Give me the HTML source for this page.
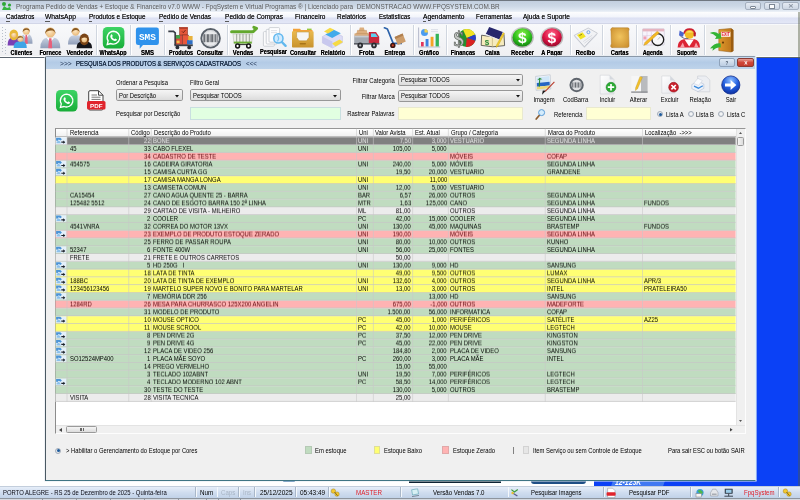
<!DOCTYPE html>
<html lang="pt-BR"><head><meta charset="utf-8"><title>Programa Pedido de Vendas</title>
<style>
html,body{margin:0;padding:0;}
body{width:800px;height:500px;overflow:hidden;position:relative;background:#fff;font-family:"Liberation Sans", sans-serif;}
#app{position:absolute;left:0;top:0;width:800px;height:500px;overflow:hidden;will-change:transform;}
#app div,#app svg,#app .t{position:absolute;}
.t{white-space:nowrap;display:block;}
svg{overflow:visible;}
</style></head><body><div id="app">
<div style="left:0px;top:0px;width:800px;height:12.4px;background:linear-gradient(#6f7780 0,#6f7780 0.7px,#c2cfdf 0.9px,#ccd8e6 50%,#dbe4ef 80%,#eef2f8 100%);"></div>
<span class="t" style="left:16.00px;top:1.60px;font-size:7.2px;line-height:9px;color:#5a5a5a;transform:scaleX(0.8900);transform-origin:0 50%;white-space:pre;">Programa Pedido de Vendas + Estoque &amp; Financeiro v7.0 WWW - FpqSystem e Virtual Programas ® | Licenciado para  DEMONSTRACAO WWW.FPQSYSTEM.COM.BR</span>
<div style="left:745px;top:2px;width:16px;height:8px;border:1px solid #a5b0bf;border-radius:2px;background:linear-gradient(#e4eaf2,#ccd6e3);box-sizing:border-box;"></div>
<div style="left:764px;top:2px;width:15.5px;height:8px;border:1px solid #a5b0bf;border-radius:2px;background:linear-gradient(#e4eaf2,#ccd6e3);box-sizing:border-box;"></div>
<div style="left:782px;top:2px;width:17px;height:8px;border:1px solid #a5b0bf;border-radius:2px;background:linear-gradient(#e4eaf2,#ccd6e3);box-sizing:border-box;"></div>
<div style="left:750px;top:5.5px;width:6px;height:3px;border:0.8px solid #7c8795;border-radius:1px;box-sizing:border-box;background:#fbfcfd;"></div>
<div style="left:768.5px;top:3.6px;width:6px;height:5px;border:0.8px solid #7c8795;box-sizing:border-box;background:#fbfcfd;"></div>
<span class="t" style="left:788.00px;top:2.70px;font-size:5.8px;line-height:7px;color:#8a94a2;transform:scaleX(1.1500);transform-origin:50% 50%;font-weight:bold;">✕</span>
<svg style="left:1px;top:1px" width="12" height="10" viewBox="0 0 12 10"><circle cx="3" cy="3" r="2" fill="#2da836"/><circle cx="8.5" cy="4" r="1.6" fill="#2da836"/><path d="M1 9 L3 5 L6 7 L9 6 L10 9 Z" fill="#36b440"/></svg>
<div style="left:0px;top:12.4px;width:800px;height:11.6px;background:linear-gradient(#fdfdfe 0,#f3f5fb 38%,#dde1f3 52%,#e2e6f6 88%,#c9cee0 100%);"></div>
<span class="t" style="left:6.00px;top:12.40px;font-size:7.6px;line-height:10px;color:#151515;transform:scaleX(0.8235);transform-origin:0 50%;text-shadow:0 0 0.4px #333;">Cadastros</span>
<div style="left:6px;top:21px;width:3.8px;height:1px;background:#5a5a5a;height:1px;"></div>
<span class="t" style="left:45.00px;top:12.40px;font-size:7.6px;line-height:10px;color:#151515;transform:scaleX(0.8849);transform-origin:0 50%;text-shadow:0 0 0.4px #333;">WhatsApp</span>
<div style="left:45px;top:21px;width:5.2px;height:1px;background:#5a5a5a;height:1px;"></div>
<span class="t" style="left:88.50px;top:12.40px;font-size:7.6px;line-height:10px;color:#151515;transform:scaleX(0.8471);transform-origin:0 50%;text-shadow:0 0 0.4px #333;">Produtos e Estoque</span>
<div style="left:88.5px;top:21px;width:3.8px;height:1px;background:#5a5a5a;height:1px;"></div>
<span class="t" style="left:159.00px;top:12.40px;font-size:7.6px;line-height:10px;color:#151515;transform:scaleX(0.8435);transform-origin:0 50%;text-shadow:0 0 0.4px #333;">Pedido de Vendas</span>
<div style="left:159px;top:21px;width:3.8px;height:1px;background:#5a5a5a;height:1px;"></div>
<span class="t" style="left:225.00px;top:12.40px;font-size:7.6px;line-height:10px;color:#151515;transform:scaleX(0.8642);transform-origin:0 50%;text-shadow:0 0 0.4px #333;">Pedido de Compras</span>
<div style="left:225px;top:21px;width:3.8px;height:1px;background:#5a5a5a;height:1px;"></div>
<span class="t" style="left:295.00px;top:12.40px;font-size:7.6px;line-height:10px;color:#151515;transform:scaleX(0.8603);transform-origin:0 50%;text-shadow:0 0 0.4px #333;">Financeiro</span>
<span class="t" style="left:337.00px;top:12.40px;font-size:7.6px;line-height:10px;color:#151515;transform:scaleX(0.8483);transform-origin:0 50%;text-shadow:0 0 0.4px #333;">Relatórios</span>
<span class="t" style="left:378.75px;top:12.40px;font-size:7.6px;line-height:10px;color:#151515;transform:scaleX(0.8137);transform-origin:0 50%;text-shadow:0 0 0.4px #333;">Estatisticas</span>
<span class="t" style="left:422.50px;top:12.40px;font-size:7.6px;line-height:10px;color:#151515;transform:scaleX(0.8776);transform-origin:0 50%;text-shadow:0 0 0.4px #333;">Agendamento</span>
<div style="left:422.5px;top:21px;width:3.8px;height:1px;background:#5a5a5a;height:1px;"></div>
<span class="t" style="left:475.75px;top:12.40px;font-size:7.6px;line-height:10px;color:#151515;transform:scaleX(0.8363);transform-origin:0 50%;text-shadow:0 0 0.4px #333;">Ferramentas</span>
<span class="t" style="left:523.00px;top:12.40px;font-size:7.6px;line-height:10px;color:#151515;transform:scaleX(0.8630);transform-origin:0 50%;text-shadow:0 0 0.4px #333;">Ajuda e Suporte</span>
<div style="left:0px;top:24px;width:800px;height:33.6px;background:linear-gradient(#f8f9fb,#f2f3f6 60%,#efeff1);"></div>
<div style="left:705.6px;top:24.6px;width:94.4px;height:31.4px;background:#f0f0f0;"></div>
<div style="left:0px;top:56px;width:800px;height:1.1px;background:#fdfdfd;"></div>
<div style="left:0px;top:57.1px;width:800px;height:1.1px;background:#5d6670;"></div>
<div style="left:2px;top:27px;width:1px;height:1px;background:#b9c0cb;"></div>
<div style="left:4.5px;top:28.5px;width:1px;height:1px;background:#b9c0cb;"></div>
<div style="left:2px;top:30px;width:1px;height:1px;background:#b9c0cb;"></div>
<div style="left:4.5px;top:31.5px;width:1px;height:1px;background:#b9c0cb;"></div>
<div style="left:2px;top:33px;width:1px;height:1px;background:#b9c0cb;"></div>
<div style="left:4.5px;top:34.5px;width:1px;height:1px;background:#b9c0cb;"></div>
<div style="left:2px;top:36px;width:1px;height:1px;background:#b9c0cb;"></div>
<div style="left:4.5px;top:37.5px;width:1px;height:1px;background:#b9c0cb;"></div>
<div style="left:2px;top:39px;width:1px;height:1px;background:#b9c0cb;"></div>
<div style="left:4.5px;top:40.5px;width:1px;height:1px;background:#b9c0cb;"></div>
<div style="left:2px;top:42px;width:1px;height:1px;background:#b9c0cb;"></div>
<div style="left:4.5px;top:43.5px;width:1px;height:1px;background:#b9c0cb;"></div>
<div style="left:2px;top:45px;width:1px;height:1px;background:#b9c0cb;"></div>
<div style="left:4.5px;top:46.5px;width:1px;height:1px;background:#b9c0cb;"></div>
<div style="left:2px;top:48px;width:1px;height:1px;background:#b9c0cb;"></div>
<div style="left:4.5px;top:49.5px;width:1px;height:1px;background:#b9c0cb;"></div>
<div style="left:2px;top:51px;width:1px;height:1px;background:#b9c0cb;"></div>
<div style="left:4.5px;top:52.5px;width:1px;height:1px;background:#b9c0cb;"></div>
<div style="left:95.75px;top:25px;width:1px;height:30px;background:#d0d6df;"></div>
<div style="left:96.75px;top:25px;width:1px;height:30px;background:#fff;"></div>
<div style="left:130.1px;top:25px;width:1px;height:30px;background:#d0d6df;"></div>
<div style="left:131.1px;top:25px;width:1px;height:30px;background:#fff;"></div>
<div style="left:163.9px;top:25px;width:1px;height:30px;background:#d0d6df;"></div>
<div style="left:164.9px;top:25px;width:1px;height:30px;background:#fff;"></div>
<div style="left:227.2px;top:25px;width:1px;height:30px;background:#d0d6df;"></div>
<div style="left:228.2px;top:25px;width:1px;height:30px;background:#fff;"></div>
<div style="left:349.8px;top:25px;width:1px;height:30px;background:#d0d6df;"></div>
<div style="left:350.8px;top:25px;width:1px;height:30px;background:#fff;"></div>
<div style="left:412.5px;top:25px;width:1px;height:30px;background:#d0d6df;"></div>
<div style="left:413.5px;top:25px;width:1px;height:30px;background:#fff;"></div>
<div style="left:446.3px;top:25px;width:1px;height:30px;background:#d0d6df;"></div>
<div style="left:447.3px;top:25px;width:1px;height:30px;background:#fff;"></div>
<div style="left:569.5px;top:25px;width:1px;height:30px;background:#d0d6df;"></div>
<div style="left:570.5px;top:25px;width:1px;height:30px;background:#fff;"></div>
<div style="left:602px;top:25px;width:1px;height:30px;background:#d0d6df;"></div>
<div style="left:603px;top:25px;width:1px;height:30px;background:#fff;"></div>
<div style="left:635.5px;top:25px;width:1px;height:30px;background:#d0d6df;"></div>
<div style="left:636.5px;top:25px;width:1px;height:30px;background:#fff;"></div>
<div style="left:670px;top:25px;width:1px;height:30px;background:#d0d6df;"></div>
<div style="left:671px;top:25px;width:1px;height:30px;background:#fff;"></div>
<div style="left:704px;top:25px;width:1px;height:30px;background:#d0d6df;"></div>
<div style="left:705px;top:25px;width:1px;height:30px;background:#fff;"></div>
<span class="t" style="left:7.60px;top:48.20px;font-size:6.9px;line-height:9px;color:#000;transform:scaleX(0.8114);transform-origin:50% 50%;font-weight:bold;text-shadow:0 0 0.35px rgba(0,0,0,0.8);">Clientes</span>
<span class="t" style="left:36.60px;top:48.20px;font-size:6.9px;line-height:9px;color:#000;transform:scaleX(0.8207);transform-origin:50% 50%;font-weight:bold;text-shadow:0 0 0.35px rgba(0,0,0,0.8);">Fornece</span>
<span class="t" style="left:63.50px;top:48.20px;font-size:6.9px;line-height:9px;color:#000;transform:scaleX(0.8440);transform-origin:50% 50%;font-weight:bold;text-shadow:0 0 0.35px rgba(0,0,0,0.8);">Vendedor</span>
<span class="t" style="left:96.47px;top:48.20px;font-size:6.9px;line-height:9px;color:#000;transform:scaleX(0.7926);transform-origin:50% 50%;font-weight:bold;text-shadow:0 0 0.35px rgba(0,0,0,0.8);">WhatsApp</span>
<span class="t" style="left:140.03px;top:48.20px;font-size:6.9px;line-height:9px;color:#000;transform:scaleX(0.8706);transform-origin:50% 50%;font-weight:bold;text-shadow:0 0 0.35px rgba(0,0,0,0.8);">SMS</span>
<span class="t" style="left:165.68px;top:48.20px;font-size:6.9px;line-height:9px;color:#000;transform:scaleX(0.7936);transform-origin:50% 50%;font-weight:bold;text-shadow:0 0 0.35px rgba(0,0,0,0.8);">Produtos</span>
<span class="t" style="left:194.12px;top:48.20px;font-size:6.9px;line-height:9px;color:#000;transform:scaleX(0.8240);transform-origin:50% 50%;font-weight:bold;text-shadow:0 0 0.35px rgba(0,0,0,0.8);">Consultar</span>
<span class="t" style="left:230.73px;top:48.20px;font-size:6.9px;line-height:9px;color:#000;transform:scaleX(0.8496);transform-origin:50% 50%;font-weight:bold;text-shadow:0 0 0.35px rgba(0,0,0,0.8);">Vendas</span>
<span class="t" style="left:257.03px;top:47.30px;font-size:6.9px;line-height:9px;color:#000;transform:scaleX(0.8197);transform-origin:50% 50%;font-weight:bold;text-shadow:0 0 0.35px rgba(0,0,0,0.8);">Pesquisar</span>
<span class="t" style="left:286.92px;top:48.20px;font-size:6.9px;line-height:9px;color:#000;transform:scaleX(0.8085);transform-origin:50% 50%;font-weight:bold;text-shadow:0 0 0.35px rgba(0,0,0,0.8);">Consultar</span>
<span class="t" style="left:318.07px;top:48.20px;font-size:6.9px;line-height:9px;color:#000;transform:scaleX(0.8137);transform-origin:50% 50%;font-weight:bold;text-shadow:0 0 0.35px rgba(0,0,0,0.8);">Relatório</span>
<span class="t" style="left:357.79px;top:48.20px;font-size:6.9px;line-height:9px;color:#000;transform:scaleX(0.8882);transform-origin:50% 50%;font-weight:bold;text-shadow:0 0 0.35px rgba(0,0,0,0.8);">Frota</span>
<span class="t" style="left:382.37px;top:48.20px;font-size:6.9px;line-height:9px;color:#000;transform:scaleX(0.7991);transform-origin:50% 50%;font-weight:bold;text-shadow:0 0 0.35px rgba(0,0,0,0.8);">Entrega</span>
<span class="t" style="left:417.44px;top:48.20px;font-size:6.9px;line-height:9px;color:#000;transform:scaleX(0.8291);transform-origin:50% 50%;font-weight:bold;text-shadow:0 0 0.35px rgba(0,0,0,0.8);">Gráfico</span>
<span class="t" style="left:448.26px;top:48.20px;font-size:6.9px;line-height:9px;color:#000;transform:scaleX(0.8202);transform-origin:50% 50%;font-weight:bold;text-shadow:0 0 0.35px rgba(0,0,0,0.8);">Finanças</span>
<span class="t" style="left:483.31px;top:48.20px;font-size:6.9px;line-height:9px;color:#000;transform:scaleX(0.8158);transform-origin:50% 50%;font-weight:bold;text-shadow:0 0 0.35px rgba(0,0,0,0.8);">Caixa</span>
<span class="t" style="left:508.60px;top:48.20px;font-size:6.9px;line-height:9px;color:#000;transform:scaleX(0.8457);transform-origin:50% 50%;font-weight:bold;text-shadow:0 0 0.35px rgba(0,0,0,0.8);">Receber</span>
<span class="t" style="left:538.78px;top:48.20px;font-size:6.9px;line-height:9px;color:#000;transform:scaleX(0.8256);transform-origin:50% 50%;font-weight:bold;text-shadow:0 0 0.35px rgba(0,0,0,0.8);">A Pagar</span>
<span class="t" style="left:573.91px;top:48.20px;font-size:6.9px;line-height:9px;color:#000;transform:scaleX(0.8401);transform-origin:50% 50%;font-weight:bold;text-shadow:0 0 0.35px rgba(0,0,0,0.8);">Recibo</span>
<span class="t" style="left:609.28px;top:48.20px;font-size:6.9px;line-height:9px;color:#000;transform:scaleX(0.8299);transform-origin:50% 50%;font-weight:bold;text-shadow:0 0 0.35px rgba(0,0,0,0.8);">Cartas</span>
<span class="t" style="left:640.37px;top:48.20px;font-size:6.9px;line-height:9px;color:#000;transform:scaleX(0.7915);transform-origin:50% 50%;font-weight:bold;text-shadow:0 0 0.35px rgba(0,0,0,0.8);">Agenda</span>
<span class="t" style="left:674.48px;top:48.20px;font-size:6.9px;line-height:9px;color:#000;transform:scaleX(0.7683);transform-origin:50% 50%;font-weight:bold;text-shadow:0 0 0.35px rgba(0,0,0,0.8);">Suporte</span>
<svg style="left:0;top:0" width="800" height="500" viewBox="0 0 800 500"><defs>
<radialGradient id="skin" cx=".45" cy=".4" r=".6"><stop offset="0" stop-color="#ffe9c4"/><stop offset="1" stop-color="#e9b877"/></radialGradient>
<linearGradient id="suit" x1="0" y1="0" x2="0" y2="1"><stop offset="0" stop-color="#c9d2e2"/><stop offset="1" stop-color="#8f9db8"/></linearGradient>
<radialGradient id="gball" cx=".5" cy=".3" r=".75"><stop offset="0" stop-color="#8cf04a"/><stop offset=".55" stop-color="#2fc01c"/><stop offset="1" stop-color="#0f7a10"/></radialGradient>
<radialGradient id="rball" cx=".5" cy=".3" r=".75"><stop offset="0" stop-color="#ff6a8c"/><stop offset=".55" stop-color="#dc1444"/><stop offset="1" stop-color="#8c0828"/></radialGradient>
<radialGradient id="bball" cx=".5" cy=".25" r=".8"><stop offset="0" stop-color="#8fc0ff"/><stop offset=".5" stop-color="#2460e0"/><stop offset="1" stop-color="#0a2a98"/></radialGradient>
<linearGradient id="ring" x1="0" y1="0" x2="1" y2="1"><stop offset="0" stop-color="#f2f2f2"/><stop offset=".5" stop-color="#8e8e8e"/><stop offset="1" stop-color="#dcdcdc"/></linearGradient>
<radialGradient id="parch" cx=".5" cy=".45" r=".7"><stop offset="0" stop-color="#f1c45e"/><stop offset="1" stop-color="#c98c2c"/></radialGradient>
<linearGradient id="gold" x1="0" y1="0" x2="0" y2="1"><stop offset="0" stop-color="#e9b94e"/><stop offset="1" stop-color="#c8922c"/></linearGradient>
<linearGradient id="wgreen" x1="0" y1="0" x2="0" y2="1"><stop offset="0" stop-color="#3ed465"/><stop offset="1" stop-color="#18ad38"/></linearGradient>
<linearGradient id="door" x1="0" y1="0" x2="1" y2="0"><stop offset="0" stop-color="#e09a2c"/><stop offset="1" stop-color="#b87018"/></linearGradient>
<linearGradient id="pg" x1="0" y1="0" x2="1" y2="1"><stop offset="0" stop-color="#ffffff"/><stop offset="1" stop-color="#e4e6ea"/></linearGradient>
</defs><path d="M20.10 43.70 q0 -9.03 4.65 -9.50 h3.10 q4.65 0 4.65 9.50 z" fill="url(#suit)"/><path d="M25.40 35.62 l1.80 0.00 l0.36 8.07 l-2.52 0.00 z" fill="#e8607a"/><path d="M26.30 38.48 l-2.70 -3.99 l5.40 0 z" fill="#fff"/><path d="M25.51 34.96 l1.58 0.00 l0.43 8.55 l-2.45 0.00 z" fill="#e8607a"/><ellipse cx="26.30" cy="31.20" rx="3.31" ry="3.60" fill="url(#skin)"/><path d="M22.63 32.46 A3.67 4.32 0 0 1 29.97 32.46 Q29.72 30.30 27.92 29.94 Q25.94 29.58 24.32 30.48 Q23.06 31.02 22.63 32.46 z" fill="#8a5a22"/><path d="M7.60 45.50 q0 -7.60 4.65 -8.00 h3.10 q4.65 0 4.65 8.00 z" fill="#7a3fb4"/><ellipse cx="13.80" cy="34.88" rx="4.39" ry="5.40" fill="#e8b838"/><ellipse cx="13.80" cy="34.70" rx="2.59" ry="3.06" fill="url(#skin)"/><path d="M10.92 34.16 Q11.28 30.56 13.80 30.56 Q16.32 30.56 16.68 34.16 Q14.52 32.00 10.92 34.16 z" fill="#e8b838"/><path d="M13.60 48.00 q0 -6.08 4.95 -6.40 h3.30 q4.95 0 4.95 6.40 z" fill="#3fa4e6"/><ellipse cx="20.20" cy="38.60" rx="2.94" ry="3.20" fill="url(#skin)"/><path d="M16.94 39.72 A3.26 3.84 0 0 1 23.46 39.72 Q23.24 37.80 21.64 37.48 Q19.88 37.16 18.44 37.96 Q17.32 38.44 16.94 39.72 z" fill="#9a6a2a"/><path d="M40.30 48.20 q0 -10.26 7.50 -10.80 h5.00 q7.50 0 7.50 10.80 z" fill="url(#suit)"/><path d="M49.00 39.02 l2.60 0.00 l0.52 9.18 l-3.64 0.00 z" fill="#e8607a"/><path d="M50.30 42.26 l-3.90 -4.54 l7.80 0 z" fill="#fff"/><path d="M49.16 38.26 l2.29 0.00 l0.62 9.72 l-3.54 0.00 z" fill="#e8607a"/><ellipse cx="50.30" cy="32.40" rx="4.78" ry="5.20" fill="url(#skin)"/><path d="M45.00 34.22 A5.30 6.24 0 0 1 55.60 34.22 Q55.24 31.10 52.64 30.58 Q49.78 30.06 47.44 31.36 Q45.62 32.14 45.00 34.22 z" fill="#8a5a22"/><path d="M68.00 44.60 q0 -8.93 5.70 -9.40 h3.80 q5.70 0 5.70 9.40 z" fill="url(#suit)"/><ellipse cx="75.60" cy="31.60" rx="3.77" ry="4.10" fill="url(#skin)"/><path d="M71.42 33.04 A4.18 4.92 0 0 1 79.78 33.04 Q79.49 30.58 77.44 30.17 Q75.19 29.76 73.34 30.78 Q71.91 31.40 71.42 33.04 z" fill="#8a5a22"/><path d="M76.50 48.20 q0 -6.27 5.85 -6.60 h3.90 q5.85 0 5.85 6.60 z" fill="#15151a"/><ellipse cx="84.30" cy="39.37" rx="4.76" ry="5.85" fill="#7a4416"/><ellipse cx="84.30" cy="39.18" rx="2.81" ry="3.31" fill="url(#skin)"/><path d="M81.18 38.59 Q81.57 34.69 84.30 34.69 Q87.03 34.69 87.42 38.59 Q85.08 36.25 81.18 38.59 z" fill="#7a4416"/><rect x="102.800" y="27" width="21.600" height="21.600" rx="4.600" fill="url(#wgreen)"/><g transform="translate(102.800 27) scale(1.005)"><path d="M10.800 4.200a6.400 6.400 0 0 0-5.500 9.700L4.400 17.400l3.600-.9a6.400 6.400 0 1 0 2.800-12.300z" fill="none" stroke="#fff" stroke-width="1.350"/><path d="M8.300 7.600c.3-.5.800-.4 1 .1l.5 1.100c.1.300 0 .5-.2.700l-.4.400c.5 1 1.300 1.800 2.300 2.300l.5-.5c.2-.2.500-.2.700-.1l1.100.6c.4.200.4.700.1 1-.7.800-1.600 1-2.700.6-1.700-.6-3.100-2.100-3.600-3.700-.3-1 .1-1.900.7-2.500z" fill="#fff"/></g><path d="M138.200 27.600h18.400a2.300 2.300 0 0 1 2.300 2.300v12.800a2.300 2.300 0 0 1-2.300 2.300h-13.600l-3.300 3.800v-3.800h-1.500a2.300 2.300 0 0 1-2.300-2.300v-12.800a2.300 2.300 0 0 1 2.300-2.300z" fill="#2f92ec"/><text x="147.400" y="39.700" font-family="Liberation Mono, monospace" font-weight="bold" font-size="9.500" fill="#fff" text-anchor="middle" textLength="17" lengthAdjust="spacingAndGlyphs">SMS</text><path d="M168.300 31.400h5.200l1.700 1.500v12" fill="none" stroke="#3a3f48" stroke-width="1.700"/><rect x="174.400" y="44.300" width="18.400" height="1.900" fill="#3a3f48"/><circle cx="177.400" cy="47.400" r="1.900" fill="#2a2e36"/><circle cx="189.200" cy="47.400" r="1.900" fill="#2a2e36"/><rect x="179.600" y="27.400" width="8" height="7.600" fill="#e4573a" stroke="#7a2c1c" stroke-width=".5"/><path d="M182 31.400l1.300 1.300 2.200-2.600" stroke="#5a1c10" stroke-width=".8" fill="none"/><rect x="179.600" y="27.400" width="8" height="1.600" fill="#b8402c"/><rect x="176" y="35.200" width="6.600" height="9" fill="#d94a3c" stroke="#6a241c" stroke-width=".4"/><rect x="182.600" y="35" width="6" height="9.200" fill="#e8583c" stroke="#6a241c" stroke-width=".4"/><rect x="176" y="35.200" width="4" height="3.400" fill="#3fa44a"/><rect x="188.200" y="36" width="4.400" height="4.200" fill="#e8b23c"/><rect x="187" y="40.200" width="5.600" height="4" fill="#2f6fc4"/><rect x="176.600" y="40.600" width="3" height="2.600" fill="#f0c04a"/><circle cx="210.600" cy="38.300" r="9.300" fill="#e9eaec" stroke="#596069" stroke-width="1.900"/><circle cx="210.600" cy="38.300" r="7.700" fill="none" stroke="#c9ccd1" stroke-width=".8"/><rect x="203.40" y="34.200" width="1.60" height="8" fill="#6a6e74"/><rect x="205.60" y="34.200" width="0.80" height="8" fill="#6a6e74"/><rect x="207.00" y="34.200" width="1.90" height="8" fill="#6a6e74"/><rect x="209.60" y="34.200" width="1.00" height="8" fill="#6a6e74"/><rect x="211.20" y="34.200" width="1.80" height="8" fill="#6a6e74"/><rect x="213.60" y="34.200" width="0.90" height="8" fill="#6a6e74"/><rect x="215.10" y="34.200" width="1.20" height="8" fill="#6a6e74"/><rect x="216.80" y="34.200" width="0.80" height="8" fill="#6a6e74"/><path d="M231.600 31.800h21.500l3.400-3.400l-2.600-1" fill="none" stroke="#62a82c" stroke-width="3" stroke-linecap="round" stroke-linejoin="round"/><path d="M233 34h19.600l-1 9.600h-17.600z" fill="#eef0ea" stroke="#b9bdb2" stroke-width=".6"/><rect x="236.00" y="34" width="1.200" height="9.500" fill="#aab0a6"/><rect x="239.20" y="34" width="1.200" height="9.500" fill="#aab0a6"/><rect x="242.40" y="34" width="1.200" height="9.500" fill="#aab0a6"/><rect x="245.60" y="34" width="1.200" height="9.500" fill="#aab0a6"/><rect x="248.80" y="34" width="1.200" height="9.500" fill="#aab0a6"/><rect x="233.800" y="41.600" width="18" height="1.900" fill="#6aae34"/><path d="M236 44.600h14" stroke="#2a2a2a" stroke-width="1"/><circle cx="237.600" cy="46" r="1.900" fill="#fff" stroke="#141414" stroke-width="1.500"/><circle cx="248.600" cy="46" r="1.900" fill="#fff" stroke="#141414" stroke-width="1.500"/><rect x="263.400" y="31.600" width="11" height="14.600" rx="1" fill="#fbfbfc" stroke="#c4c8ce" stroke-width=".8"/><rect x="266.200" y="29.400" width="11" height="14.600" rx="1" fill="#fbfbfc" stroke="#c4c8ce" stroke-width=".8"/><rect x="269" y="27.600" width="10.600" height="14.600" rx="1" fill="#fdfdfe" stroke="#c4c8ce" stroke-width=".8"/><path d="M271 30.600h6M271 32.600h6" stroke="#d4d7dc" stroke-width=".7"/><circle cx="278.400" cy="38.400" r="4.600" fill="#cfeaff" stroke="#62b8ee" stroke-width="1.500"/><path d="M277.400 35.400q2.400 3 0 6" stroke="#7cc6f4" stroke-width="1.200" fill="none"/><path d="M281.800 42l3.800 3.800" stroke="#62b8ee" stroke-width="2.400" stroke-linecap="round"/><path d="M293 28.800h7l1 1.200h11.500v3h-19.500z" fill="#f2a23a"/><rect x="307" y="28.600" width="4.600" height="1.400" fill="#9ac83c"/><rect x="292" y="31.200" width="21.600" height="16.400" rx=".8" fill="url(#gold)"/><path d="M296.600 32h12.400v5.200l-2.400 3.600h-7.600l-2.400-3.600z" fill="#f6f6f4" stroke="#b88a2c" stroke-width=".5"/><rect x="299.600" y="43" width="6.400" height="1.500" rx=".7" fill="#a87418"/><path d="M322.400 36.600l9.600-5.400 10.400 5v6.600l-10 5.200-10-5z" fill="#dcdcf6" stroke="#b8b8e0" stroke-width=".5"/><path d="M325.400 34.400l8.400-4.600 7 3.400-8.600 4.800z" fill="#42aaea"/><path d="M324 31.400l6-3.600 4.200 2-6.200 3.600z" fill="#f6da44"/><path d="M332 43.400l7.600-4 3.400 2.600-7.400 4.400z" fill="#f6da44"/><path d="M322.400 36.600l10 5 0 6.400-10-5z" fill="#c8c8ee"/><path d="M359.800 27.400h4l.8 3h2.200l.8 3.200h1.800v2.400h-15v-2.400h2l.8-3.200h1.800z" fill="#dcae7e"/><path d="M357.200 30.400h9.600M355.400 33.600h13" stroke="#b88a58" stroke-width=".5"/><rect x="354.200" y="35.800" width="15" height="7.400" fill="#a2a8b0"/><rect x="354.200" y="35.800" width="15" height="1.600" fill="#c6cad0"/><path d="M368.800 32h7.200l3.200 4.800v6.600h-10.400z" fill="#c8283c"/><path d="M371 33.400h4.400l2.400 3.600h-6.800z" fill="#5ed0f0"/><rect x="354" y="43" width="25.400" height="1.600" fill="#5a5e66"/><circle cx="360.200" cy="45.400" r="2.800" fill="#2a2c30"/><circle cx="360.200" cy="45.400" r="1.100" fill="#b8bcc2"/><circle cx="374" cy="45.400" r="2.800" fill="#2a2c30"/><circle cx="374" cy="45.400" r="1.100" fill="#b8bcc2"/><path d="M384.400 27.800l3 1.200 5.800 14.400h8" fill="none" stroke="#2c62aa" stroke-width="1.700" stroke-linecap="round" stroke-linejoin="round"/><path d="M394.600 37l8-3.400 3.200 8-8 3.400z" fill="#cc9c6a"/><path d="M394.600 37l8-3.400 .8 2-8 3.400z" fill="#b08050"/><circle cx="392.800" cy="45.400" r="2.700" fill="#3a1410"/><circle cx="392.800" cy="45.400" r="1.100" fill="#d04020"/><path d="M418.600 27.600v19.400h21.600" fill="none" stroke="#b9bece" stroke-width="1.100"/><circle cx="424.500" cy="32.600" r="3.500" fill="#4a9cf0"/><path d="M424.500 32.600v-3.500a3.500 3.500 0 0 1 3.500 3.500z" fill="#f6d24a"/><path d="M431 29.600h7M431 31.600h7" stroke="#d0d4e0" stroke-width=".7"/><rect x="421" y="42" width="2.700" height="4.400" fill="#e2345a"/><rect x="425.600" y="39" width="2.900" height="7.400" fill="#3c82e2"/><rect x="430.600" y="36.800" width="2.900" height="9.600" fill="#f4a424"/><rect x="435.600" y="33.800" width="3.300" height="12.600" fill="#34b458"/><circle cx="466.800" cy="38" r="9" fill="#23902c"/><path d="M466.800 38L463 29.800a9 9 0 0 1 12.200 4.800z" fill="#f2e224"/><path d="M466.800 38l8.400-3.400a9 9 0 0 1 .2 6.200z" fill="#2a3ccc"/><path d="M466.800 38l8.600 2.800a9 9 0 0 1-9.600 6.200z" fill="#da2222"/><text x="458.800" y="45.600" font-family="Liberation Serif, serif" font-weight="bold" font-size="21" fill="#c4c8c4" stroke="#5e625e" stroke-width=".7" text-anchor="middle">$</text><path d="M481.600 35.200l10.800 1.600 11.600-2.400.6 11.200-11.800 1.200-11.600-1.400z" fill="#f6ebbe" stroke="#2c2c2c" stroke-width=".7"/><path d="M492.400 36.800v10" stroke="#b8a870" stroke-width=".6"/><text x="487" y="44.600" font-family="Liberation Sans, sans-serif" font-weight="bold" font-size="8" fill="#2a8a3a" text-anchor="middle">$</text><path d="M489.200 27l13.600 5-3.600 7.400-13.400-5.400z" fill="#26266c"/><path d="M485.800 34l13.400 5.400 .3 1.200-13.600-5.400z" fill="#e8e8f4"/><path d="M503.200 32.600l1.400.8-6.600 12.800-2 1.400.4-2.400z" fill="#f4cc2c" stroke="#a88a10" stroke-width=".3"/><ellipse cx="522.40" cy="37.400" rx="11.400" ry="10.500" fill="url(#ring)"/><ellipse cx="522.40" cy="37.400" rx="9.900" ry="9.200" fill="url(#gball)"/><text x="522.40" y="43.200" font-family="Liberation Sans, sans-serif" font-weight="bold" font-size="15.500" fill="#fff" text-anchor="middle">$</text><ellipse cx="551.90" cy="37.400" rx="11.400" ry="10.500" fill="url(#ring)"/><ellipse cx="551.90" cy="37.400" rx="9.900" ry="9.200" fill="url(#rball)"/><text x="551.90" y="43.200" font-family="Liberation Sans, sans-serif" font-weight="bold" font-size="15.500" fill="#fff" text-anchor="middle">$</text><path d="M574.200 36.600l14-7.400 9.200 5.200-13 13.600z" fill="#d8dbe2"/><path d="M574.200 35.400l14-7.400 9.200 5.200-13 13.600z" fill="#f1f2f5" stroke="#aeb2bc" stroke-width=".6"/><path d="M577 35l5.400-2.800 3.400 4.400-5.200 3z" fill="#f2e424"/><path d="M579.400 35.600l2.600-1.400" stroke="#6a6410" stroke-width=".7"/><circle cx="588.400" cy="32.200" r="1.500" fill="none" stroke="#4a8ad8" stroke-width=".7"/><path d="M583.200 41.600l9-6.400M584.400 43.200l8-5.800" stroke="#c2c6ce" stroke-width=".5"/><path d="M611.200 28.400q1.200-1.200 2.600-.6h13.200q2-.4 2.200 1.400l-.6 2 .4 13.600q.6 2.400-1.400 2.800h-13.800q-2.600.6-3.200-1.400l.8-2.600-.4-12.600q-.8-1.600.2-2.600z" fill="url(#parch)" stroke="#b07820" stroke-width=".5"/><rect x="642.600" y="28.800" width="21.600" height="16.200" rx=".8" fill="#f7f4fb" stroke="#c8c4d4" stroke-width=".6"/><rect x="642.600" y="28.800" width="21.600" height="2.600" fill="#e6b4c0"/><path d="M647 31.400v13.600M651.400 31.400v13.600M642.600 35.600h12M642.600 40h8" stroke="#d8c0dc" stroke-width=".5"/><rect x="643.400" y="36.400" width="3" height="3" fill="#f0a0b4"/><circle cx="657.800" cy="39.600" r="5.900" fill="#f8f8fa" stroke="#1a1a1a" stroke-width="1.300"/><path d="M657.800 39.600l2.400-2.600" stroke="#888" stroke-width=".5"/><path d="M657.200 31.200l2.200 1.600-12.600 11.400-3 1.200 1-3z" fill="#f4b824" stroke="#b8860c" stroke-width=".3"/><path d="M677.600 47.600q0-7 6-8.400h11q5.400 1.400 5.400 8.400z" fill="#dc2434"/><path d="M684.600 39.400l4.600 7 4.600-7z" fill="#fff"/><path d="M680 47.400l2.800-5 2 5zM694 47.400l2-5 2.600 5z" fill="#f6a0a8"/><circle cx="689.400" cy="34" r="4.800" fill="#f2bc24"/><path d="M689.400 34m-3.200-1.600a4.400 4 0 0 1 6.800 0" fill="#f8dc6c"/><path d="M684 33.600a5.600 5.600 0 0 1 11 0" fill="none" stroke="#cc2030" stroke-width="1.700"/><rect x="693.600" y="32.200" width="2.200" height="4.400" rx="1" fill="#b81c2c"/><path d="M679.600 30.600l4.400 2.400-1 3.800-4-1.400z" fill="#4a64cc"/><path d="M680.400 36.200q4 3.600 8 2.200" fill="none" stroke="#3a3a5a" stroke-width=".7"/><path d="M718.800 29.600l12.200-1.200 2.200 1.600v21l-2.200 1-12.200-1.400z" fill="url(#door)" stroke="#8a5410" stroke-width=".5"/><path d="M731 28.400l2.200 1.600v21l-2.200 1z" fill="#9a5c10"/><rect x="721" y="31.800" width="9.400" height="5" fill="#fff6f0"/><text x="725.700" y="36" font-family="Liberation Sans, sans-serif" font-weight="bold" font-size="4.600" fill="#e01828" text-anchor="middle" textLength="8.400" lengthAdjust="spacingAndGlyphs">EXIT</text><circle cx="723" cy="42.600" r="1.100" fill="#6a3c08"/><path d="M721.400 38.600l-6.400.4 1.400-2.200q-3-3.400-6.600-3.800 5-2.400 9 1l1.400-2z" fill="#34b434"/><path d="M720.600 43.400q-6.400-.6-10.600 5.200l3-.4-.6 2.600q4.400-4.400 8.400-3.400z" fill="#34b434"/></svg>
<div style="left:0px;top:58.2px;width:800px;height:428px;background:#fff;"></div>
<div style="left:756px;top:58px;width:44px;height:428px;background:#0b41f6;"></div>
<div style="left:594px;top:480.6px;width:163px;height:5.4px;background:#0b41f6;"></div>
<div style="left:409px;top:481px;width:92px;height:1.8px;background:#0d2233;"></div>
<div style="left:531px;top:480.6px;width:55px;height:3.6px;background:#1f4f86;border-radius:0 0 30px 30px;"></div>
<div style="left:283px;top:480.6px;width:12px;height:1.6px;background:#1f5f9a;border-radius:0 0 6px 6px;"></div>
<div style="left:610px;top:480.8px;width:60px;height:5.2px;overflow:hidden;"><div style="left:2px;top:0px;width:52px;height:5.2px;background:#3f78f2;transform:skewX(-20deg);"></div><span class="t" style="left:5.00px;top:-4.90px;font-size:9px;line-height:11px;color:#ffffff;transform:scaleX(0.7570);transform-origin:0 50%;font-weight:bold;font-style:italic;line-height:9px;top:-3px;">12-123K</span></div>
<div style="left:45px;top:56px;width:710.5px;height:424.6px;background:#f0f0f0;border:1px solid #4a5862;border-top-color:#8a98a8;border-right-color:#dff1f8;border-bottom:1.3px solid #3f7584;border-radius:2px 2px 0 0;box-sizing:border-box;box-shadow:0 0 0 0.6px #e6ecf2;"></div>
<div style="left:46px;top:57px;width:708.5px;height:12px;background:linear-gradient(#c7d9ee,#b3cbe6 45%,#bed3ea);"></div>
<span class="t" style="left:59.60px;top:58.50px;font-size:7.4px;line-height:9px;color:#1c3050;transform:scaleX(0.9036);transform-origin:0 50%;">&gt;&gt;&gt;</span>
<span class="t" style="left:75.80px;top:58.50px;font-size:7.4px;line-height:9px;color:#14263f;transform:scaleX(0.8056);transform-origin:0 50%;text-shadow:0 0 0.3px #14263f;">PESQUISA DOS PRODUTOS &amp; SERVIÇOS CADASTRADOS</span>
<span class="t" style="left:246.00px;top:58.50px;font-size:7.4px;line-height:9px;color:#1c3050;transform:scaleX(0.8496);transform-origin:0 50%;">&lt;&lt;&lt;</span>
<div style="left:718.6px;top:58.4px;width:16.4px;height:9px;border:1px solid #8fa3bb;border-radius:2px;background:linear-gradient(#dfe9f4,#bccde2);box-sizing:border-box;"></div>
<span class="t" style="left:724.97px;top:59.00px;font-size:6px;line-height:8px;color:#4a5a6e;transform:scaleX(0.7570);transform-origin:50% 50%;font-weight:bold;">?</span>
<div style="left:736.6px;top:58.4px;width:17px;height:9px;border:1px solid #8a3a33;border-radius:2px;background:linear-gradient(#e8a096,#d0473a 50%,#c23a2c);box-sizing:border-box;"></div>
<span class="t" style="left:742.60px;top:59.10px;font-size:6.2px;line-height:8px;color:#fff;transform:scaleX(0.7570);transform-origin:50% 50%;font-weight:bold;">✕</span>
<svg style="left:56px;top:90px" width="22" height="22" viewBox="0 0 22 22"><defs><linearGradient id="wg" x1="0" y1="0" x2="0" y2="1"><stop offset="0" stop-color="#3ed465"/><stop offset="1" stop-color="#18ad38"/></linearGradient></defs><rect x="0" y="0" width="21.5" height="21.5" rx="4.5" fill="url(#wg)"/><path d="M10.8 4.2a6.4 6.4 0 0 0-5.5 9.7L4.4 17.4l3.6-.9a6.4 6.4 0 1 0 2.8-12.3z" fill="none" stroke="#fff" stroke-width="1.3"/><path d="M8.3 7.6c.3-.5.8-.4 1 .1l.5 1.1c.1.3 0 .5-.2.7l-.4.4c.5 1 1.300 1.800 2.300 2.300l.5-.5c.2-.2.5-.2.700-.1l1.100.6c.4.200.4.700.100 1-.700.800-1.600 1-2.700.600-1.700-.600-3.100-2.100-3.600-3.700-.300-1 .100-1.900.700-2.500z" fill="#fff"/></svg>
<svg style="left:87px;top:90px" width="19" height="21" viewBox="0 0 19 21"><path d="M3 0.700h8.500l4.500 4.500v13.500a1.300 1.300 0 0 1-1.300 1.300H3a1.300 1.300 0 0 1-1.300-1.300V2A1.300 1.300 0 0 1 3 .7z" fill="#fff" stroke="#444" stroke-width="1"/><path d="M11.500.7v4.500H16" fill="none" stroke="#444" stroke-width="1"/><path d="M4.500 5h5.500M4.500 7.200h9M4.500 9.400h9" stroke="#555" stroke-width=".8"/><rect x="0" y="11" width="18.500" height="8.600" rx="1.500" fill="#e0242c"/><text x="9.250" y="17.600" font-family="Liberation Sans, sans-serif" font-weight="bold" font-size="6.200" fill="#fff" text-anchor="middle">PDF</text></svg>
<span class="t" style="left:116.30px;top:77.70px;font-size:7.8px;line-height:10px;color:#000;transform:scaleX(0.7499);transform-origin:0 50%;">Ordenar a Pesquisa</span>
<span class="t" style="left:189.50px;top:77.70px;font-size:7.8px;line-height:10px;color:#000;transform:scaleX(0.7570);transform-origin:0 50%;">Filtro Geral</span>
<div style="left:115.8px;top:89.4px;width:66.8px;height:12px;border:1px solid #979797;border-radius:1.8px;background:linear-gradient(#f5f5f5,#e9e9e9 50%,#dcdcdc);box-sizing:border-box;"></div><span class="t" style="left:119.00px;top:90.50px;font-size:7.8px;line-height:10px;color:#000;transform:scaleX(0.7570);transform-origin:0 50%;">Por Descrição</span><svg style="left:175.2px;top:94.5px" width="4" height="2.500" viewBox="0 0 4 2.500"><path d="M0 0h4L2 2.500z" fill="#111"/></svg>
<div style="left:189.5px;top:89.4px;width:151px;height:12px;border:1px solid #979797;border-radius:1.8px;background:linear-gradient(#f5f5f5,#e9e9e9 50%,#dcdcdc);box-sizing:border-box;"></div><span class="t" style="left:192.70px;top:90.50px;font-size:7.8px;line-height:10px;color:#000;transform:scaleX(0.7570);transform-origin:0 50%;">Pesquisar TODOS</span><svg style="left:333.1px;top:94.5px" width="4" height="2.500" viewBox="0 0 4 2.500"><path d="M0 0h4L2 2.500z" fill="#111"/></svg>
<span class="t" style="left:116.00px;top:109.00px;font-size:7.8px;line-height:10px;color:#000;transform:scaleX(0.7570);transform-origin:0 50%;">Pesquisar por Descrição</span>
<div style="left:189.5px;top:106.8px;width:151px;height:13.6px;background:#e1ffe1;border:1px solid #c9dfe0;box-sizing:border-box;"></div>
<span class="t" style="left:338.60px;top:75.50px;font-size:7.8px;line-height:10px;color:#000;transform:scaleX(0.7570);transform-origin:100% 50%;">Filtrar Categoria</span>
<span class="t" style="left:350.75px;top:91.60px;font-size:7.8px;line-height:10px;color:#000;transform:scaleX(0.7570);transform-origin:100% 50%;">Filtrar Marca</span>
<span class="t" style="left:332.10px;top:109.40px;font-size:7.8px;line-height:10px;color:#000;transform:scaleX(0.7570);transform-origin:100% 50%;">Rastrear Palavras</span>
<div style="left:398px;top:74px;width:125px;height:12px;border:1px solid #979797;border-radius:1.8px;background:linear-gradient(#f5f5f5,#e9e9e9 50%,#dcdcdc);box-sizing:border-box;"></div><span class="t" style="left:401.20px;top:75.10px;font-size:7.8px;line-height:10px;color:#000;transform:scaleX(0.7570);transform-origin:0 50%;">Pesquisar TODOS</span><svg style="left:515.6px;top:79.1px" width="4" height="2.500" viewBox="0 0 4 2.500"><path d="M0 0h4L2 2.500z" fill="#111"/></svg>
<div style="left:398px;top:90.1px;width:125px;height:12px;border:1px solid #979797;border-radius:1.8px;background:linear-gradient(#f5f5f5,#e9e9e9 50%,#dcdcdc);box-sizing:border-box;"></div><span class="t" style="left:401.20px;top:91.20px;font-size:7.8px;line-height:10px;color:#000;transform:scaleX(0.7570);transform-origin:0 50%;">Pesquisar TODOS</span><svg style="left:515.6px;top:95.2px" width="4" height="2.500" viewBox="0 0 4 2.500"><path d="M0 0h4L2 2.500z" fill="#111"/></svg>
<div style="left:398px;top:106.8px;width:125px;height:13.6px;background:#ffffd4;border:1px solid #e9e9cf;box-sizing:border-box;"></div>
<div style="left:585.5px;top:106.8px;width:65.5px;height:13.6px;background:#ffffd4;border:1px solid #e9e9cf;box-sizing:border-box;"></div>
<span class="t" style="left:553.80px;top:109.60px;font-size:7.8px;line-height:10px;color:#000;transform:scaleX(0.7570);transform-origin:0 50%;">Referencia</span>
<span class="t" style="left:529.92px;top:95.00px;font-size:7.8px;line-height:10px;color:#000;transform:scaleX(0.7570);transform-origin:50% 50%;">Imagem</span>
<span class="t" style="left:559.32px;top:95.00px;font-size:7.8px;line-height:10px;color:#000;transform:scaleX(0.7570);transform-origin:50% 50%;">CodBarra</span>
<span class="t" style="left:597.10px;top:95.00px;font-size:7.8px;line-height:10px;color:#000;transform:scaleX(0.7570);transform-origin:50% 50%;">Incluir</span>
<span class="t" style="left:627.32px;top:95.00px;font-size:7.8px;line-height:10px;color:#000;transform:scaleX(0.7570);transform-origin:50% 50%;">Alterar</span>
<span class="t" style="left:657.80px;top:95.00px;font-size:7.8px;line-height:10px;color:#000;transform:scaleX(0.7570);transform-origin:50% 50%;">Excluir</span>
<span class="t" style="left:686.20px;top:95.00px;font-size:7.8px;line-height:10px;color:#000;transform:scaleX(0.7570);transform-origin:50% 50%;">Relação</span>
<span class="t" style="left:724.07px;top:95.00px;font-size:7.8px;line-height:10px;color:#000;transform:scaleX(0.7570);transform-origin:50% 50%;">Sair</span>
<div style="left:657px;top:111px;width:6px;height:6px;border-radius:50%;border:0.8px solid #a3adb9;background:radial-gradient(#fdfdfd,#d6dadf);box-sizing:border-box;"></div><div style="left:658.5px;top:112.5px;width:3px;height:3px;border-radius:50%;background:#1c5a9c;"></div>
<span class="t" style="left:665.50px;top:109.60px;font-size:7.8px;line-height:10px;color:#000;transform:scaleX(0.7570);transform-origin:0 50%;">Lista A</span>
<div style="left:687.8px;top:111px;width:6px;height:6px;border-radius:50%;border:0.8px solid #a3adb9;background:radial-gradient(#fdfdfd,#d6dadf);box-sizing:border-box;"></div>
<span class="t" style="left:696.30px;top:109.60px;font-size:7.8px;line-height:10px;color:#000;transform:scaleX(0.7570);transform-origin:0 50%;">Lista B</span>
<div style="left:718.3px;top:111px;width:6px;height:6px;border-radius:50%;border:0.8px solid #a3adb9;background:radial-gradient(#fdfdfd,#d6dadf);box-sizing:border-box;"></div>
<span class="t" style="left:726.80px;top:109.60px;font-size:7.8px;line-height:10px;color:#000;transform:scaleX(0.7570);transform-origin:0 50%;">Lista C</span>
<svg style="left:0;top:0" width="800" height="500" viewBox="0 0 800 500"><path d="M535.600 76.400l14.600-1.600.6 14.200-14.600 1.400z" fill="#f4f6fa" stroke="#b4bcc8" stroke-width=".6"/><path d="M536.600 77.400l12.800-1.400.2 5.800-12.800 1.200z" fill="#cfe6f8"/><path d="M536.800 83l12.800-1.200.2 3.600-12.900 1.300z" fill="#2464c4"/><path d="M536.900 86.700l12.900-1.300.1 2.800-12.900 1.200z" fill="#ecd67a"/><path d="M538.600 86.800l.6-7.400-2 .8 2.400-2.400 2.800 1.400-2.200.2-.4 7.400z" fill="#2c8a34"/><path d="M554.400 81.800l-8.600 9-1.600.6" stroke="#b83c2c" stroke-width="1.100" fill="none"/><path d="M545.800 90.800l-3.800 4 .8-4.200z" fill="#1a1a1a"/><circle cx="576.600" cy="85" r="6.200" fill="#dfe0e3" stroke="#5e646c" stroke-width="1.900"/><rect x="572.20" y="82.400" width="1.00" height="5.200" fill="#6a6e74"/><rect x="573.80" y="82.400" width="0.60" height="5.200" fill="#6a6e74"/><rect x="575.00" y="82.400" width="1.20" height="5.200" fill="#6a6e74"/><rect x="576.80" y="82.400" width="0.70" height="5.200" fill="#6a6e74"/><rect x="578.10" y="82.400" width="1.10" height="5.200" fill="#6a6e74"/><rect x="579.80" y="82.400" width="0.60" height="5.200" fill="#6a6e74"/><rect x="580.90" y="82.400" width="0.50" height="5.200" fill="#6a6e74"/><path d="M600.200 75.200h9.400l4.400 4.400v14.400h-13.800z" fill="url(#pg)" stroke="#c8ccd2" stroke-width=".5"/><path d="M609.600 75.200v4.400h4.400z" fill="#d4d8de"/><circle cx="611" cy="87.200" r="4.900" fill="#2cac34" stroke="#1a7a24" stroke-width=".5"/><path d="M611 84v6.400M607.800 87.200h6.400" stroke="#fff" stroke-width="1.700"/><rect x="631.200" y="76" width="16.400" height="16.600" fill="#f6f6f6"/><rect x="641" y="76" width="6.600" height="16.600" fill="#b9bbbe"/><rect x="631.200" y="91.400" width="16.400" height="1.400" fill="#8e9094"/><path d="M640 76.400l2.400 1-4.800 11.400-2.200 1.800.2-2.800z" fill="#f2c02c" stroke="#b08810" stroke-width=".3"/><path d="M661.800 76h8.400l4.400 4.400v12.800h-12.800z" fill="url(#pg)" stroke="#c8ccd2" stroke-width=".5"/><path d="M670.200 76v4.400h4.400z" fill="#d4d8de"/><circle cx="673.600" cy="87.200" r="4.900" fill="#c8202c" stroke="#8a0c14" stroke-width=".5"/><path d="M671.400 85l4.400 4.400M675.800 85l-4.400 4.400" stroke="#fff" stroke-width="1.600"/><path d="M697.600 76h8.200l4 4v11.800h-12.200z" fill="#eceef2" stroke="#c0c4cc" stroke-width=".5"/><path d="M691.800 84.600l6-3.400 6 2.800v4.400l-5.800 3.200-6.200-3z" fill="#eef2fa" stroke="#a8b4cc" stroke-width=".5"/><path d="M693.600 83.400l4.200-5 4.600 2.200-3.800 4.800z" fill="#fafbfd" stroke="#b8c0d0" stroke-width=".4"/><path d="M694 86.200l4.400 2 4.400-2.400" stroke="#3c8cdc" stroke-width="1.300" fill="none"/><circle cx="730.800" cy="85" r="9.100" fill="url(#bball)" stroke="#0c2a8c" stroke-width=".8"/><path d="M725 83.400h5.600v-3.400l5.800 5-5.800 5v-3.400h-5.600z" fill="#fff"/><path d="M539.600 115l-3.400 4" stroke="#8a5a2c" stroke-width="1.700" stroke-linecap="round"/><circle cx="541.600" cy="112.600" r="3" fill="#d4ecfc" stroke="#5a9cd8" stroke-width="1"/></svg>
<div style="left:54.5px;top:127.5px;width:691.1px;height:306.9px;background:#fff;border:1px solid #8c8c8c;border-top:1.4px solid #969696;border-right-color:#fdfdfd;border-bottom-color:#fdfdfd;box-sizing:border-box;"></div>
<div style="left:55.5px;top:128.7px;width:680.1px;height:8.55px;background:linear-gradient(#ffffff,#f1f1f1);border-bottom:1px solid #bdbdbd;box-sizing:border-box;"></div>
<span class="t" style="left:70.00px;top:128.45px;font-size:7.8px;line-height:10px;color:#000;transform:scaleX(0.7570);transform-origin:0 50%;white-space:pre;">Referencia</span>
<span class="t" style="left:131.00px;top:128.45px;font-size:7.8px;line-height:10px;color:#000;transform:scaleX(0.7570);transform-origin:0 50%;white-space:pre;">Código</span>
<span class="t" style="left:153.80px;top:128.45px;font-size:7.8px;line-height:10px;color:#000;transform:scaleX(0.7570);transform-origin:0 50%;white-space:pre;">Descrição do Produto</span>
<span class="t" style="left:358.80px;top:128.45px;font-size:7.8px;line-height:10px;color:#000;transform:scaleX(0.7570);transform-origin:0 50%;white-space:pre;">Uni</span>
<span class="t" style="left:375.00px;top:128.45px;font-size:7.8px;line-height:10px;color:#000;transform:scaleX(0.7570);transform-origin:0 50%;white-space:pre;">Valor Avista</span>
<span class="t" style="left:414.50px;top:128.45px;font-size:7.8px;line-height:10px;color:#000;transform:scaleX(0.7570);transform-origin:0 50%;white-space:pre;">Est. Atual</span>
<span class="t" style="left:450.80px;top:128.45px;font-size:7.8px;line-height:10px;color:#000;transform:scaleX(0.7570);transform-origin:0 50%;white-space:pre;">Grupo / Categoria</span>
<span class="t" style="left:547.50px;top:128.45px;font-size:7.8px;line-height:10px;color:#000;transform:scaleX(0.7570);transform-origin:0 50%;white-space:pre;">Marca do Produto</span>
<span class="t" style="left:645.00px;top:128.45px;font-size:7.8px;line-height:10px;color:#000;transform:scaleX(0.7570);transform-origin:0 50%;white-space:pre;">Localização  -&gt;&gt;&gt;</span>
<svg style="left:0;top:0" width="800" height="500" viewBox="0 0 800 500"><rect x="55.50" y="137.25" width="11.50" height="7.83" fill="#f4f4f4"/><rect x="67.00" y="137.25" width="668.60" height="7.83" fill="#808080"/><rect x="55.50" y="145.03" width="11.50" height="7.83" fill="#c0dcc0"/><rect x="67.00" y="145.03" width="668.60" height="7.83" fill="#c0dcc0"/><rect x="55.50" y="152.81" width="11.50" height="7.83" fill="#ffb3b3"/><rect x="67.00" y="152.81" width="668.60" height="7.83" fill="#ffb3b3"/><rect x="55.50" y="160.59" width="11.50" height="7.83" fill="#c0dcc0"/><rect x="67.00" y="160.59" width="668.60" height="7.83" fill="#c0dcc0"/><rect x="55.50" y="168.37" width="11.50" height="7.83" fill="#c0dcc0"/><rect x="67.00" y="168.37" width="668.60" height="7.83" fill="#c0dcc0"/><rect x="55.50" y="176.15" width="11.50" height="7.83" fill="#ffff73"/><rect x="67.00" y="176.15" width="668.60" height="7.83" fill="#ffff73"/><rect x="55.50" y="183.93" width="11.50" height="7.83" fill="#c0dcc0"/><rect x="67.00" y="183.93" width="668.60" height="7.83" fill="#c0dcc0"/><rect x="55.50" y="191.71" width="11.50" height="7.83" fill="#c0dcc0"/><rect x="67.00" y="191.71" width="668.60" height="7.83" fill="#c0dcc0"/><rect x="55.50" y="199.49" width="11.50" height="7.83" fill="#c0dcc0"/><rect x="67.00" y="199.49" width="668.60" height="7.83" fill="#c0dcc0"/><rect x="55.50" y="207.27" width="11.50" height="7.83" fill="#ececec"/><rect x="67.00" y="207.27" width="668.60" height="7.83" fill="#ececec"/><rect x="55.50" y="215.05" width="11.50" height="7.83" fill="#c0dcc0"/><rect x="67.00" y="215.05" width="668.60" height="7.83" fill="#c0dcc0"/><rect x="55.50" y="222.83" width="11.50" height="7.83" fill="#c0dcc0"/><rect x="67.00" y="222.83" width="668.60" height="7.83" fill="#c0dcc0"/><rect x="55.50" y="230.61" width="11.50" height="7.83" fill="#ffb3b3"/><rect x="67.00" y="230.61" width="668.60" height="7.83" fill="#ffb3b3"/><rect x="55.50" y="238.39" width="11.50" height="7.83" fill="#c0dcc0"/><rect x="67.00" y="238.39" width="668.60" height="7.83" fill="#c0dcc0"/><rect x="55.50" y="246.17" width="11.50" height="7.83" fill="#c0dcc0"/><rect x="67.00" y="246.17" width="668.60" height="7.83" fill="#c0dcc0"/><rect x="55.50" y="253.95" width="11.50" height="7.83" fill="#ececec"/><rect x="67.00" y="253.95" width="668.60" height="7.83" fill="#ececec"/><rect x="55.50" y="261.73" width="11.50" height="7.83" fill="#c0dcc0"/><rect x="67.00" y="261.73" width="668.60" height="7.83" fill="#c0dcc0"/><rect x="55.50" y="269.51" width="11.50" height="7.83" fill="#ffff73"/><rect x="67.00" y="269.51" width="668.60" height="7.83" fill="#ffff73"/><rect x="55.50" y="277.29" width="11.50" height="7.83" fill="#ffff73"/><rect x="67.00" y="277.29" width="668.60" height="7.83" fill="#ffff73"/><rect x="55.50" y="285.07" width="11.50" height="7.83" fill="#ffff73"/><rect x="67.00" y="285.07" width="668.60" height="7.83" fill="#ffff73"/><rect x="55.50" y="292.85" width="11.50" height="7.83" fill="#c0dcc0"/><rect x="67.00" y="292.85" width="668.60" height="7.83" fill="#c0dcc0"/><rect x="55.50" y="300.63" width="11.50" height="7.83" fill="#ffb3b3"/><rect x="67.00" y="300.63" width="668.60" height="7.83" fill="#ffb3b3"/><rect x="55.50" y="308.41" width="11.50" height="7.83" fill="#c0dcc0"/><rect x="67.00" y="308.41" width="668.60" height="7.83" fill="#c0dcc0"/><rect x="55.50" y="316.19" width="11.50" height="7.83" fill="#ffff73"/><rect x="67.00" y="316.19" width="668.60" height="7.83" fill="#ffff73"/><rect x="55.50" y="323.97" width="11.50" height="7.83" fill="#ffff73"/><rect x="67.00" y="323.97" width="668.60" height="7.83" fill="#ffff73"/><rect x="55.50" y="331.75" width="11.50" height="7.83" fill="#c0dcc0"/><rect x="67.00" y="331.75" width="668.60" height="7.83" fill="#c0dcc0"/><rect x="55.50" y="339.53" width="11.50" height="7.83" fill="#c0dcc0"/><rect x="67.00" y="339.53" width="668.60" height="7.83" fill="#c0dcc0"/><rect x="55.50" y="347.31" width="11.50" height="7.83" fill="#c0dcc0"/><rect x="67.00" y="347.31" width="668.60" height="7.83" fill="#c0dcc0"/><rect x="55.50" y="355.09" width="11.50" height="7.83" fill="#c0dcc0"/><rect x="67.00" y="355.09" width="668.60" height="7.83" fill="#c0dcc0"/><rect x="55.50" y="362.87" width="11.50" height="7.83" fill="#c0dcc0"/><rect x="67.00" y="362.87" width="668.60" height="7.83" fill="#c0dcc0"/><rect x="55.50" y="370.65" width="11.50" height="7.83" fill="#c0dcc0"/><rect x="67.00" y="370.65" width="668.60" height="7.83" fill="#c0dcc0"/><rect x="55.50" y="378.43" width="11.50" height="7.83" fill="#c0dcc0"/><rect x="67.00" y="378.43" width="668.60" height="7.83" fill="#c0dcc0"/><rect x="55.50" y="386.21" width="11.50" height="7.83" fill="#c0dcc0"/><rect x="67.00" y="386.21" width="668.60" height="7.83" fill="#c0dcc0"/><rect x="55.50" y="393.99" width="11.50" height="7.83" fill="#ececec"/><rect x="67.00" y="393.99" width="668.60" height="7.83" fill="#ececec"/><g transform="translate(55.50 137.25)"><rect x="0.300" y="0.200" width="10.600" height="6.500" fill="#e4f0fa"/><path d="M0.600 0.500h4.200l1.600 1.500-1.400 1.300-1.800-1-1.600 1.600-1-.8z" fill="#4c94d6"/><path d="M1 4.800l2-1.600 1.600 1 .8 1.800h-4.400z" fill="#8cc0ea"/><path d="M5.800 4.300h2v-1.100l2 1.700-2 1.700v-1.100h-2z" fill="#1a2028"/></g><rect x="55.50" y="144.18" width="680.10" height="0.850" fill="#c4c4c4" fill-opacity="0.8"/><rect x="55.50" y="151.96" width="680.10" height="0.850" fill="#c4c4c4" fill-opacity="0.8"/><rect x="55.50" y="159.74" width="680.10" height="0.850" fill="#c4c4c4" fill-opacity="0.8"/><g transform="translate(55.50 160.59)"><rect x="0.300" y="0.200" width="10.600" height="6.500" fill="#e4f0fa"/><path d="M0.600 0.500h4.200l1.600 1.500-1.400 1.300-1.800-1-1.600 1.600-1-.8z" fill="#4c94d6"/><path d="M1 4.800l2-1.600 1.600 1 .8 1.800h-4.400z" fill="#8cc0ea"/><path d="M5.800 4.300h2v-1.100l2 1.700-2 1.700v-1.100h-2z" fill="#1a2028"/></g><rect x="55.50" y="167.52" width="680.10" height="0.850" fill="#c4c4c4" fill-opacity="0.8"/><g transform="translate(55.50 168.37)"><rect x="0.300" y="0.200" width="10.600" height="6.500" fill="#e4f0fa"/><path d="M0.600 0.500h4.200l1.600 1.500-1.400 1.300-1.800-1-1.600 1.600-1-.8z" fill="#4c94d6"/><path d="M1 4.800l2-1.600 1.600 1 .8 1.800h-4.400z" fill="#8cc0ea"/><path d="M5.800 4.300h2v-1.100l2 1.700-2 1.700v-1.100h-2z" fill="#1a2028"/></g><rect x="55.50" y="175.30" width="680.10" height="0.850" fill="#c4c4c4" fill-opacity="0.8"/><rect x="55.50" y="183.08" width="680.10" height="0.850" fill="#c4c4c4" fill-opacity="0.8"/><rect x="55.50" y="190.86" width="680.10" height="0.850" fill="#c4c4c4" fill-opacity="0.8"/><rect x="55.50" y="198.64" width="680.10" height="0.850" fill="#c4c4c4" fill-opacity="0.8"/><rect x="55.50" y="206.42" width="680.10" height="0.850" fill="#c4c4c4" fill-opacity="0.8"/><rect x="55.50" y="214.20" width="680.10" height="0.850" fill="#c4c4c4" fill-opacity="0.8"/><g transform="translate(55.50 215.05)"><rect x="0.300" y="0.200" width="10.600" height="6.500" fill="#e4f0fa"/><path d="M0.600 0.500h4.200l1.600 1.500-1.400 1.300-1.800-1-1.600 1.600-1-.8z" fill="#4c94d6"/><path d="M1 4.800l2-1.600 1.600 1 .8 1.800h-4.400z" fill="#8cc0ea"/><path d="M5.800 4.300h2v-1.100l2 1.700-2 1.700v-1.100h-2z" fill="#1a2028"/></g><rect x="55.50" y="221.98" width="680.10" height="0.850" fill="#c4c4c4" fill-opacity="0.8"/><rect x="55.50" y="229.76" width="680.10" height="0.850" fill="#c4c4c4" fill-opacity="0.8"/><g transform="translate(55.50 230.61)"><rect x="0.300" y="0.200" width="10.600" height="6.500" fill="#e4f0fa"/><path d="M0.600 0.500h4.200l1.600 1.500-1.400 1.300-1.800-1-1.600 1.600-1-.8z" fill="#4c94d6"/><path d="M1 4.800l2-1.600 1.600 1 .8 1.800h-4.400z" fill="#8cc0ea"/><path d="M5.800 4.300h2v-1.100l2 1.700-2 1.700v-1.100h-2z" fill="#1a2028"/></g><rect x="55.50" y="237.54" width="680.10" height="0.850" fill="#c4c4c4" fill-opacity="0.8"/><rect x="55.50" y="245.32" width="680.10" height="0.850" fill="#c4c4c4" fill-opacity="0.8"/><g transform="translate(55.50 246.17)"><rect x="0.300" y="0.200" width="10.600" height="6.500" fill="#e4f0fa"/><path d="M0.600 0.500h4.200l1.600 1.500-1.400 1.300-1.800-1-1.600 1.600-1-.8z" fill="#4c94d6"/><path d="M1 4.800l2-1.600 1.600 1 .8 1.800h-4.400z" fill="#8cc0ea"/><path d="M5.800 4.300h2v-1.100l2 1.700-2 1.700v-1.100h-2z" fill="#1a2028"/></g><rect x="55.50" y="253.10" width="680.10" height="0.850" fill="#c4c4c4" fill-opacity="0.8"/><rect x="55.50" y="260.88" width="680.10" height="0.850" fill="#c4c4c4" fill-opacity="0.8"/><g transform="translate(55.50 261.73)"><rect x="0.300" y="0.200" width="10.600" height="6.500" fill="#e4f0fa"/><path d="M0.600 0.500h4.200l1.600 1.500-1.400 1.300-1.800-1-1.600 1.600-1-.8z" fill="#4c94d6"/><path d="M1 4.800l2-1.600 1.600 1 .8 1.800h-4.400z" fill="#8cc0ea"/><path d="M5.800 4.300h2v-1.100l2 1.700-2 1.700v-1.100h-2z" fill="#1a2028"/></g><rect x="55.50" y="268.66" width="680.10" height="0.850" fill="#c4c4c4" fill-opacity="0.8"/><g transform="translate(55.50 269.51)"><rect x="0.300" y="0.200" width="10.600" height="6.500" fill="#e4f0fa"/><path d="M0.600 0.500h4.200l1.600 1.500-1.400 1.300-1.800-1-1.600 1.600-1-.8z" fill="#4c94d6"/><path d="M1 4.800l2-1.600 1.600 1 .8 1.800h-4.400z" fill="#8cc0ea"/><path d="M5.800 4.300h2v-1.100l2 1.700-2 1.700v-1.100h-2z" fill="#1a2028"/></g><rect x="55.50" y="276.44" width="680.10" height="0.850" fill="#c4c4c4" fill-opacity="0.8"/><g transform="translate(55.50 277.29)"><rect x="0.300" y="0.200" width="10.600" height="6.500" fill="#e4f0fa"/><path d="M0.600 0.500h4.200l1.600 1.500-1.400 1.300-1.800-1-1.600 1.600-1-.8z" fill="#4c94d6"/><path d="M1 4.800l2-1.600 1.600 1 .8 1.800h-4.400z" fill="#8cc0ea"/><path d="M5.800 4.300h2v-1.100l2 1.700-2 1.700v-1.100h-2z" fill="#1a2028"/></g><rect x="55.50" y="284.22" width="680.10" height="0.850" fill="#c4c4c4" fill-opacity="0.8"/><g transform="translate(55.50 285.07)"><rect x="0.300" y="0.200" width="10.600" height="6.500" fill="#e4f0fa"/><path d="M0.600 0.500h4.200l1.600 1.500-1.400 1.300-1.800-1-1.600 1.600-1-.8z" fill="#4c94d6"/><path d="M1 4.800l2-1.600 1.600 1 .8 1.800h-4.400z" fill="#8cc0ea"/><path d="M5.800 4.300h2v-1.100l2 1.700-2 1.700v-1.100h-2z" fill="#1a2028"/></g><rect x="55.50" y="292.00" width="680.10" height="0.850" fill="#c4c4c4" fill-opacity="0.8"/><g transform="translate(55.50 292.85)"><rect x="0.300" y="0.200" width="10.600" height="6.500" fill="#e4f0fa"/><path d="M0.600 0.500h4.200l1.600 1.500-1.400 1.300-1.800-1-1.600 1.600-1-.8z" fill="#4c94d6"/><path d="M1 4.800l2-1.600 1.600 1 .8 1.800h-4.400z" fill="#8cc0ea"/><path d="M5.800 4.300h2v-1.100l2 1.700-2 1.700v-1.100h-2z" fill="#1a2028"/></g><rect x="55.50" y="299.78" width="680.10" height="0.850" fill="#c4c4c4" fill-opacity="0.8"/><rect x="55.50" y="307.56" width="680.10" height="0.850" fill="#c4c4c4" fill-opacity="0.8"/><rect x="55.50" y="315.34" width="680.10" height="0.850" fill="#c4c4c4" fill-opacity="0.8"/><g transform="translate(55.50 316.19)"><rect x="0.300" y="0.200" width="10.600" height="6.500" fill="#e4f0fa"/><path d="M0.600 0.500h4.200l1.600 1.500-1.400 1.300-1.800-1-1.600 1.600-1-.8z" fill="#4c94d6"/><path d="M1 4.800l2-1.600 1.600 1 .8 1.800h-4.400z" fill="#8cc0ea"/><path d="M5.800 4.300h2v-1.100l2 1.700-2 1.700v-1.100h-2z" fill="#1a2028"/></g><rect x="55.50" y="323.12" width="680.10" height="0.850" fill="#c4c4c4" fill-opacity="0.8"/><rect x="55.50" y="330.90" width="680.10" height="0.850" fill="#c4c4c4" fill-opacity="0.8"/><g transform="translate(55.50 331.75)"><rect x="0.300" y="0.200" width="10.600" height="6.500" fill="#e4f0fa"/><path d="M0.600 0.500h4.200l1.600 1.500-1.400 1.300-1.800-1-1.600 1.600-1-.8z" fill="#4c94d6"/><path d="M1 4.800l2-1.600 1.600 1 .8 1.800h-4.400z" fill="#8cc0ea"/><path d="M5.800 4.300h2v-1.100l2 1.700-2 1.700v-1.100h-2z" fill="#1a2028"/></g><rect x="55.50" y="338.68" width="680.10" height="0.850" fill="#c4c4c4" fill-opacity="0.8"/><g transform="translate(55.50 339.53)"><rect x="0.300" y="0.200" width="10.600" height="6.500" fill="#e4f0fa"/><path d="M0.600 0.500h4.200l1.600 1.500-1.400 1.300-1.800-1-1.600 1.600-1-.8z" fill="#4c94d6"/><path d="M1 4.800l2-1.600 1.600 1 .8 1.800h-4.400z" fill="#8cc0ea"/><path d="M5.800 4.300h2v-1.100l2 1.700-2 1.700v-1.100h-2z" fill="#1a2028"/></g><rect x="55.50" y="346.46" width="680.10" height="0.850" fill="#c4c4c4" fill-opacity="0.8"/><g transform="translate(55.50 347.31)"><rect x="0.300" y="0.200" width="10.600" height="6.500" fill="#e4f0fa"/><path d="M0.600 0.500h4.200l1.600 1.500-1.400 1.300-1.800-1-1.600 1.600-1-.8z" fill="#4c94d6"/><path d="M1 4.800l2-1.600 1.600 1 .8 1.800h-4.400z" fill="#8cc0ea"/><path d="M5.800 4.300h2v-1.100l2 1.700-2 1.700v-1.100h-2z" fill="#1a2028"/></g><rect x="55.50" y="354.24" width="680.10" height="0.850" fill="#c4c4c4" fill-opacity="0.8"/><g transform="translate(55.50 355.09)"><rect x="0.300" y="0.200" width="10.600" height="6.500" fill="#e4f0fa"/><path d="M0.600 0.500h4.200l1.600 1.500-1.400 1.300-1.800-1-1.600 1.600-1-.8z" fill="#4c94d6"/><path d="M1 4.800l2-1.600 1.600 1 .8 1.800h-4.400z" fill="#8cc0ea"/><path d="M5.800 4.300h2v-1.100l2 1.700-2 1.700v-1.100h-2z" fill="#1a2028"/></g><rect x="55.50" y="362.02" width="680.10" height="0.850" fill="#c4c4c4" fill-opacity="0.8"/><rect x="55.50" y="369.80" width="680.10" height="0.850" fill="#c4c4c4" fill-opacity="0.8"/><rect x="55.50" y="377.58" width="680.10" height="0.850" fill="#c4c4c4" fill-opacity="0.8"/><g transform="translate(55.50 378.43)"><rect x="0.300" y="0.200" width="10.600" height="6.500" fill="#e4f0fa"/><path d="M0.600 0.500h4.200l1.600 1.500-1.400 1.300-1.800-1-1.600 1.600-1-.8z" fill="#4c94d6"/><path d="M1 4.800l2-1.600 1.600 1 .8 1.800h-4.400z" fill="#8cc0ea"/><path d="M5.800 4.300h2v-1.100l2 1.700-2 1.700v-1.100h-2z" fill="#1a2028"/></g><rect x="55.50" y="385.36" width="680.10" height="0.850" fill="#c4c4c4" fill-opacity="0.8"/><rect x="55.50" y="393.14" width="680.10" height="0.850" fill="#c4c4c4" fill-opacity="0.8"/><rect x="55.50" y="400.92" width="680.10" height="0.850" fill="#c4c4c4" fill-opacity="0.8"/><rect x="66.60" y="128.70" width="0.800" height="273.07" fill="#c8c8c8" fill-opacity="0.7"/><rect x="128.40" y="128.70" width="0.800" height="273.07" fill="#c8c8c8" fill-opacity="0.7"/><rect x="150.80" y="128.70" width="0.800" height="273.07" fill="#c8c8c8" fill-opacity="0.7"/><rect x="356.20" y="128.70" width="0.800" height="273.07" fill="#c8c8c8" fill-opacity="0.7"/><rect x="372.90" y="128.70" width="0.800" height="273.07" fill="#c8c8c8" fill-opacity="0.7"/><rect x="412.30" y="128.70" width="0.800" height="273.07" fill="#c8c8c8" fill-opacity="0.7"/><rect x="447.90" y="128.70" width="0.800" height="273.07" fill="#c8c8c8" fill-opacity="0.7"/><rect x="544.80" y="128.70" width="0.800" height="273.07" fill="#c8c8c8" fill-opacity="0.7"/><rect x="642.20" y="128.70" width="0.800" height="273.07" fill="#c8c8c8" fill-opacity="0.7"/></svg>
<div style="left:0;top:137px;width:800px;height:274px;will-change:transform;transform-origin:0 0;transform:translateY(1.20px) scaleY(0.97250);"><span class="t" style="left:141.53px;top:-1.60px;font-size:7.8px;line-height:10px;color:#e6e6e6;transform:scaleX(0.7570);transform-origin:100% 50%;">22</span><span class="t" style="left:153.00px;top:-1.60px;font-size:7.8px;line-height:10px;color:#e6e6e6;transform:scaleX(0.7570);transform-origin:0 50%;white-space:pre;">BONE</span><span class="t" style="left:358.20px;top:-1.60px;font-size:7.8px;line-height:10px;color:#e6e6e6;transform:scaleX(0.7570);transform-origin:0 50%;">UNI</span><span class="t" style="left:395.62px;top:-1.60px;font-size:7.8px;line-height:10px;color:#e6e6e6;transform:scaleX(0.7570);transform-origin:100% 50%;">7,50</span><span class="t" style="left:427.49px;top:-1.60px;font-size:7.8px;line-height:10px;color:#e6e6e6;transform:scaleX(0.7570);transform-origin:100% 50%;">3,000</span><span class="t" style="left:450.00px;top:-1.60px;font-size:7.8px;line-height:10px;color:#e6e6e6;transform:scaleX(0.7570);transform-origin:0 50%;">VESTUARIO</span><span class="t" style="left:546.60px;top:-1.60px;font-size:7.8px;line-height:10px;color:#e6e6e6;transform:scaleX(0.7570);transform-origin:0 50%;">SEGUNDA LINHA</span><span class="t" style="left:69.50px;top:6.40px;font-size:7.8px;line-height:10px;color:#000;transform:scaleX(0.7570);transform-origin:0 50%;">45</span><span class="t" style="left:141.53px;top:6.40px;font-size:7.8px;line-height:10px;color:#000;transform:scaleX(0.7570);transform-origin:100% 50%;">33</span><span class="t" style="left:153.00px;top:6.40px;font-size:7.8px;line-height:10px;color:#000;transform:scaleX(0.7570);transform-origin:0 50%;white-space:pre;">CABO FLEXEL</span><span class="t" style="left:358.20px;top:6.40px;font-size:7.8px;line-height:10px;color:#000;transform:scaleX(0.7570);transform-origin:0 50%;">UNI</span><span class="t" style="left:386.95px;top:6.40px;font-size:7.8px;line-height:10px;color:#000;transform:scaleX(0.7570);transform-origin:100% 50%;">105,00</span><span class="t" style="left:427.49px;top:6.40px;font-size:7.8px;line-height:10px;color:#000;transform:scaleX(0.7570);transform-origin:100% 50%;">5,000</span><span class="t" style="left:141.53px;top:14.40px;font-size:7.8px;line-height:10px;color:#5c0008;transform:scaleX(0.7570);transform-origin:100% 50%;">34</span><span class="t" style="left:153.00px;top:14.40px;font-size:7.8px;line-height:10px;color:#5c0008;transform:scaleX(0.7570);transform-origin:0 50%;white-space:pre;">CADASTRO DE TESTE</span><span class="t" style="left:450.00px;top:14.40px;font-size:7.8px;line-height:10px;color:#5c0008;transform:scaleX(0.7570);transform-origin:0 50%;">MÓVEIS</span><span class="t" style="left:546.60px;top:14.40px;font-size:7.8px;line-height:10px;color:#5c0008;transform:scaleX(0.7570);transform-origin:0 50%;">COFAP</span><span class="t" style="left:69.50px;top:22.40px;font-size:7.8px;line-height:10px;color:#000;transform:scaleX(0.7570);transform-origin:0 50%;">454575</span><span class="t" style="left:141.53px;top:22.40px;font-size:7.8px;line-height:10px;color:#000;transform:scaleX(0.7570);transform-origin:100% 50%;">16</span><span class="t" style="left:153.00px;top:22.40px;font-size:7.8px;line-height:10px;color:#000;transform:scaleX(0.7570);transform-origin:0 50%;white-space:pre;">CADEIRA GIRATORIA</span><span class="t" style="left:358.20px;top:22.40px;font-size:7.8px;line-height:10px;color:#000;transform:scaleX(0.7570);transform-origin:0 50%;">UNI</span><span class="t" style="left:386.95px;top:22.40px;font-size:7.8px;line-height:10px;color:#000;transform:scaleX(0.7570);transform-origin:100% 50%;">240,00</span><span class="t" style="left:427.49px;top:22.40px;font-size:7.8px;line-height:10px;color:#000;transform:scaleX(0.7570);transform-origin:100% 50%;">5,000</span><span class="t" style="left:450.00px;top:22.40px;font-size:7.8px;line-height:10px;color:#000;transform:scaleX(0.7570);transform-origin:0 50%;">MÓVEIS</span><span class="t" style="left:546.60px;top:22.40px;font-size:7.8px;line-height:10px;color:#000;transform:scaleX(0.7570);transform-origin:0 50%;">SEGUNDA LINHA</span><span class="t" style="left:141.53px;top:30.40px;font-size:7.8px;line-height:10px;color:#000;transform:scaleX(0.7570);transform-origin:100% 50%;">15</span><span class="t" style="left:153.00px;top:30.40px;font-size:7.8px;line-height:10px;color:#000;transform:scaleX(0.7570);transform-origin:0 50%;white-space:pre;">CAMISA CURTA GG</span><span class="t" style="left:391.29px;top:30.40px;font-size:7.8px;line-height:10px;color:#000;transform:scaleX(0.7570);transform-origin:100% 50%;">19,50</span><span class="t" style="left:423.15px;top:30.40px;font-size:7.8px;line-height:10px;color:#000;transform:scaleX(0.7570);transform-origin:100% 50%;">20,000</span><span class="t" style="left:450.00px;top:30.40px;font-size:7.8px;line-height:10px;color:#000;transform:scaleX(0.7570);transform-origin:0 50%;">VESTUARIO</span><span class="t" style="left:546.60px;top:30.40px;font-size:7.8px;line-height:10px;color:#000;transform:scaleX(0.7570);transform-origin:0 50%;">GRANDENE</span><span class="t" style="left:141.53px;top:38.40px;font-size:7.8px;line-height:10px;color:#000;transform:scaleX(0.7570);transform-origin:100% 50%;">17</span><span class="t" style="left:153.00px;top:38.40px;font-size:7.8px;line-height:10px;color:#000;transform:scaleX(0.7570);transform-origin:0 50%;white-space:pre;">CAMISA MANGA LONGA</span><span class="t" style="left:358.20px;top:38.40px;font-size:7.8px;line-height:10px;color:#000;transform:scaleX(0.7570);transform-origin:0 50%;">UNI</span><span class="t" style="left:423.73px;top:38.40px;font-size:7.8px;line-height:10px;color:#000;transform:scaleX(0.7570);transform-origin:100% 50%;">11,000</span><span class="t" style="left:141.53px;top:46.40px;font-size:7.8px;line-height:10px;color:#000;transform:scaleX(0.7570);transform-origin:100% 50%;">13</span><span class="t" style="left:153.00px;top:46.40px;font-size:7.8px;line-height:10px;color:#000;transform:scaleX(0.7570);transform-origin:0 50%;white-space:pre;">CAMISETA COMUN</span><span class="t" style="left:358.20px;top:46.40px;font-size:7.8px;line-height:10px;color:#000;transform:scaleX(0.7570);transform-origin:0 50%;">UNI</span><span class="t" style="left:391.29px;top:46.40px;font-size:7.8px;line-height:10px;color:#000;transform:scaleX(0.7570);transform-origin:100% 50%;">12,00</span><span class="t" style="left:427.49px;top:46.40px;font-size:7.8px;line-height:10px;color:#000;transform:scaleX(0.7570);transform-origin:100% 50%;">5,000</span><span class="t" style="left:450.00px;top:46.40px;font-size:7.8px;line-height:10px;color:#000;transform:scaleX(0.7570);transform-origin:0 50%;">VESTUARIO</span><span class="t" style="left:69.50px;top:54.40px;font-size:7.8px;line-height:10px;color:#000;transform:scaleX(0.7570);transform-origin:0 50%;">CA15454</span><span class="t" style="left:141.53px;top:54.40px;font-size:7.8px;line-height:10px;color:#000;transform:scaleX(0.7570);transform-origin:100% 50%;">27</span><span class="t" style="left:153.00px;top:54.40px;font-size:7.8px;line-height:10px;color:#000;transform:scaleX(0.7570);transform-origin:0 50%;white-space:pre;">CANO AGUA QUENTE 25 - BARRA</span><span class="t" style="left:358.20px;top:54.40px;font-size:7.8px;line-height:10px;color:#000;transform:scaleX(0.7570);transform-origin:0 50%;">BAR</span><span class="t" style="left:395.62px;top:54.40px;font-size:7.8px;line-height:10px;color:#000;transform:scaleX(0.7570);transform-origin:100% 50%;">6,57</span><span class="t" style="left:423.15px;top:54.40px;font-size:7.8px;line-height:10px;color:#000;transform:scaleX(0.7570);transform-origin:100% 50%;">26,000</span><span class="t" style="left:450.00px;top:54.40px;font-size:7.8px;line-height:10px;color:#000;transform:scaleX(0.7570);transform-origin:0 50%;">OUTROS</span><span class="t" style="left:546.60px;top:54.40px;font-size:7.8px;line-height:10px;color:#000;transform:scaleX(0.7570);transform-origin:0 50%;">SEGUNDA LINHA</span><span class="t" style="left:69.50px;top:62.40px;font-size:7.8px;line-height:10px;color:#000;transform:scaleX(0.7570);transform-origin:0 50%;">125482 5512</span><span class="t" style="left:141.53px;top:62.40px;font-size:7.8px;line-height:10px;color:#000;transform:scaleX(0.7570);transform-origin:100% 50%;">24</span><span class="t" style="left:153.00px;top:62.40px;font-size:7.8px;line-height:10px;color:#000;transform:scaleX(0.7570);transform-origin:0 50%;white-space:pre;">CANO DE ESGOTO BARRA 150 2ª LINHA</span><span class="t" style="left:358.20px;top:62.40px;font-size:7.8px;line-height:10px;color:#000;transform:scaleX(0.7570);transform-origin:0 50%;">MTR</span><span class="t" style="left:395.62px;top:62.40px;font-size:7.8px;line-height:10px;color:#000;transform:scaleX(0.7570);transform-origin:100% 50%;">1,63</span><span class="t" style="left:418.82px;top:62.40px;font-size:7.8px;line-height:10px;color:#000;transform:scaleX(0.7570);transform-origin:100% 50%;">125,000</span><span class="t" style="left:450.00px;top:62.40px;font-size:7.8px;line-height:10px;color:#000;transform:scaleX(0.7570);transform-origin:0 50%;">CANO</span><span class="t" style="left:546.60px;top:62.40px;font-size:7.8px;line-height:10px;color:#000;transform:scaleX(0.7570);transform-origin:0 50%;">SEGUNDA LINHA</span><span class="t" style="left:644.30px;top:62.40px;font-size:7.8px;line-height:10px;color:#000;transform:scaleX(0.7570);transform-origin:0 50%;">FUNDOS</span><span class="t" style="left:141.53px;top:70.40px;font-size:7.8px;line-height:10px;color:#000;transform:scaleX(0.7570);transform-origin:100% 50%;">29</span><span class="t" style="left:153.00px;top:70.40px;font-size:7.8px;line-height:10px;color:#000;transform:scaleX(0.7570);transform-origin:0 50%;white-space:pre;">CARTAO DE VISITA - MILHEIRO</span><span class="t" style="left:358.20px;top:70.40px;font-size:7.8px;line-height:10px;color:#000;transform:scaleX(0.7570);transform-origin:0 50%;">ML</span><span class="t" style="left:391.29px;top:70.40px;font-size:7.8px;line-height:10px;color:#000;transform:scaleX(0.7570);transform-origin:100% 50%;">81,00</span><span class="t" style="left:450.00px;top:70.40px;font-size:7.8px;line-height:10px;color:#000;transform:scaleX(0.7570);transform-origin:0 50%;">OUTROS</span><span class="t" style="left:546.60px;top:70.40px;font-size:7.8px;line-height:10px;color:#000;transform:scaleX(0.7570);transform-origin:0 50%;">SEGUNDA LINHA</span><span class="t" style="left:145.86px;top:78.40px;font-size:7.8px;line-height:10px;color:#000;transform:scaleX(0.7570);transform-origin:100% 50%;">2</span><span class="t" style="left:153.00px;top:78.40px;font-size:7.8px;line-height:10px;color:#000;transform:scaleX(0.7570);transform-origin:0 50%;white-space:pre;">COOLER</span><span class="t" style="left:358.20px;top:78.40px;font-size:7.8px;line-height:10px;color:#000;transform:scaleX(0.7570);transform-origin:0 50%;">PC</span><span class="t" style="left:391.29px;top:78.40px;font-size:7.8px;line-height:10px;color:#000;transform:scaleX(0.7570);transform-origin:100% 50%;">42,00</span><span class="t" style="left:423.15px;top:78.40px;font-size:7.8px;line-height:10px;color:#000;transform:scaleX(0.7570);transform-origin:100% 50%;">15,000</span><span class="t" style="left:450.00px;top:78.40px;font-size:7.8px;line-height:10px;color:#000;transform:scaleX(0.7570);transform-origin:0 50%;">COOLER</span><span class="t" style="left:546.60px;top:78.40px;font-size:7.8px;line-height:10px;color:#000;transform:scaleX(0.7570);transform-origin:0 50%;">SEGUNDA LINHA</span><span class="t" style="left:69.50px;top:86.40px;font-size:7.8px;line-height:10px;color:#000;transform:scaleX(0.7570);transform-origin:0 50%;">4541VNRA</span><span class="t" style="left:141.53px;top:86.40px;font-size:7.8px;line-height:10px;color:#000;transform:scaleX(0.7570);transform-origin:100% 50%;">32</span><span class="t" style="left:153.00px;top:86.40px;font-size:7.8px;line-height:10px;color:#000;transform:scaleX(0.7570);transform-origin:0 50%;white-space:pre;">CORREA DO MOTOR 13VX</span><span class="t" style="left:358.20px;top:86.40px;font-size:7.8px;line-height:10px;color:#000;transform:scaleX(0.7570);transform-origin:0 50%;">UNI</span><span class="t" style="left:386.95px;top:86.40px;font-size:7.8px;line-height:10px;color:#000;transform:scaleX(0.7570);transform-origin:100% 50%;">130,00</span><span class="t" style="left:423.15px;top:86.40px;font-size:7.8px;line-height:10px;color:#000;transform:scaleX(0.7570);transform-origin:100% 50%;">45,000</span><span class="t" style="left:450.00px;top:86.40px;font-size:7.8px;line-height:10px;color:#000;transform:scaleX(0.7570);transform-origin:0 50%;">MAQUINAS</span><span class="t" style="left:546.60px;top:86.40px;font-size:7.8px;line-height:10px;color:#000;transform:scaleX(0.7570);transform-origin:0 50%;">BRASTEMP</span><span class="t" style="left:644.30px;top:86.40px;font-size:7.8px;line-height:10px;color:#000;transform:scaleX(0.7570);transform-origin:0 50%;">FUNDOS</span><span class="t" style="left:141.53px;top:94.40px;font-size:7.8px;line-height:10px;color:#5c0008;transform:scaleX(0.7570);transform-origin:100% 50%;">23</span><span class="t" style="left:153.00px;top:94.40px;font-size:7.8px;line-height:10px;color:#5c0008;transform:scaleX(0.7570);transform-origin:0 50%;white-space:pre;">EXEMPLO DE PRODUTO ESTOQUE ZERADO</span><span class="t" style="left:358.20px;top:94.40px;font-size:7.8px;line-height:10px;color:#5c0008;transform:scaleX(0.7570);transform-origin:0 50%;">UNI</span><span class="t" style="left:386.95px;top:94.40px;font-size:7.8px;line-height:10px;color:#5c0008;transform:scaleX(0.7570);transform-origin:100% 50%;">190,00</span><span class="t" style="left:450.00px;top:94.40px;font-size:7.8px;line-height:10px;color:#5c0008;transform:scaleX(0.7570);transform-origin:0 50%;">MÓVEIS</span><span class="t" style="left:546.60px;top:94.40px;font-size:7.8px;line-height:10px;color:#5c0008;transform:scaleX(0.7570);transform-origin:0 50%;">SEGUNDA LINHA</span><span class="t" style="left:141.53px;top:102.40px;font-size:7.8px;line-height:10px;color:#000;transform:scaleX(0.7570);transform-origin:100% 50%;">25</span><span class="t" style="left:153.00px;top:102.40px;font-size:7.8px;line-height:10px;color:#000;transform:scaleX(0.7570);transform-origin:0 50%;white-space:pre;">FERRO DE PASSAR ROUPA</span><span class="t" style="left:358.20px;top:102.40px;font-size:7.8px;line-height:10px;color:#000;transform:scaleX(0.7570);transform-origin:0 50%;">UNI</span><span class="t" style="left:391.29px;top:102.40px;font-size:7.8px;line-height:10px;color:#000;transform:scaleX(0.7570);transform-origin:100% 50%;">80,00</span><span class="t" style="left:423.15px;top:102.40px;font-size:7.8px;line-height:10px;color:#000;transform:scaleX(0.7570);transform-origin:100% 50%;">10,000</span><span class="t" style="left:450.00px;top:102.40px;font-size:7.8px;line-height:10px;color:#000;transform:scaleX(0.7570);transform-origin:0 50%;">OUTROS</span><span class="t" style="left:546.60px;top:102.40px;font-size:7.8px;line-height:10px;color:#000;transform:scaleX(0.7570);transform-origin:0 50%;">KUNHO</span><span class="t" style="left:69.50px;top:110.40px;font-size:7.8px;line-height:10px;color:#000;transform:scaleX(0.7570);transform-origin:0 50%;">52347</span><span class="t" style="left:145.86px;top:110.40px;font-size:7.8px;line-height:10px;color:#000;transform:scaleX(0.7570);transform-origin:100% 50%;">6</span><span class="t" style="left:153.00px;top:110.40px;font-size:7.8px;line-height:10px;color:#000;transform:scaleX(0.7570);transform-origin:0 50%;white-space:pre;">FONTE 400W</span><span class="t" style="left:358.20px;top:110.40px;font-size:7.8px;line-height:10px;color:#000;transform:scaleX(0.7570);transform-origin:0 50%;">UNI</span><span class="t" style="left:391.29px;top:110.40px;font-size:7.8px;line-height:10px;color:#000;transform:scaleX(0.7570);transform-origin:100% 50%;">56,00</span><span class="t" style="left:423.15px;top:110.40px;font-size:7.8px;line-height:10px;color:#000;transform:scaleX(0.7570);transform-origin:100% 50%;">25,000</span><span class="t" style="left:450.00px;top:110.40px;font-size:7.8px;line-height:10px;color:#000;transform:scaleX(0.7570);transform-origin:0 50%;">FONTES</span><span class="t" style="left:546.60px;top:110.40px;font-size:7.8px;line-height:10px;color:#000;transform:scaleX(0.7570);transform-origin:0 50%;">SEGUNDA LINHA</span><span class="t" style="left:69.50px;top:118.40px;font-size:7.8px;line-height:10px;color:#000;transform:scaleX(0.7570);transform-origin:0 50%;">FRETE</span><span class="t" style="left:141.53px;top:118.40px;font-size:7.8px;line-height:10px;color:#000;transform:scaleX(0.7570);transform-origin:100% 50%;">21</span><span class="t" style="left:153.00px;top:118.40px;font-size:7.8px;line-height:10px;color:#000;transform:scaleX(0.7570);transform-origin:0 50%;white-space:pre;">FRETE E OUTROS CARRETOS</span><span class="t" style="left:391.29px;top:118.40px;font-size:7.8px;line-height:10px;color:#000;transform:scaleX(0.7570);transform-origin:100% 50%;">50,00</span><span class="t" style="left:145.86px;top:126.40px;font-size:7.8px;line-height:10px;color:#000;transform:scaleX(0.7570);transform-origin:100% 50%;">5</span><span class="t" style="left:153.00px;top:126.40px;font-size:7.8px;line-height:10px;color:#000;transform:scaleX(0.7570);transform-origin:0 50%;white-space:pre;">HD 250G   I</span><span class="t" style="left:358.20px;top:126.40px;font-size:7.8px;line-height:10px;color:#000;transform:scaleX(0.7570);transform-origin:0 50%;">UNI</span><span class="t" style="left:386.95px;top:126.40px;font-size:7.8px;line-height:10px;color:#000;transform:scaleX(0.7570);transform-origin:100% 50%;">130,00</span><span class="t" style="left:427.49px;top:126.40px;font-size:7.8px;line-height:10px;color:#000;transform:scaleX(0.7570);transform-origin:100% 50%;">9,000</span><span class="t" style="left:450.00px;top:126.40px;font-size:7.8px;line-height:10px;color:#000;transform:scaleX(0.7570);transform-origin:0 50%;">HD</span><span class="t" style="left:546.60px;top:126.40px;font-size:7.8px;line-height:10px;color:#000;transform:scaleX(0.7570);transform-origin:0 50%;">SANSUNG</span><span class="t" style="left:141.53px;top:134.40px;font-size:7.8px;line-height:10px;color:#000;transform:scaleX(0.7570);transform-origin:100% 50%;">18</span><span class="t" style="left:153.00px;top:134.40px;font-size:7.8px;line-height:10px;color:#000;transform:scaleX(0.7570);transform-origin:0 50%;white-space:pre;">LATA DE TINTA</span><span class="t" style="left:391.29px;top:134.40px;font-size:7.8px;line-height:10px;color:#000;transform:scaleX(0.7570);transform-origin:100% 50%;">49,00</span><span class="t" style="left:427.49px;top:134.40px;font-size:7.8px;line-height:10px;color:#000;transform:scaleX(0.7570);transform-origin:100% 50%;">9,500</span><span class="t" style="left:450.00px;top:134.40px;font-size:7.8px;line-height:10px;color:#000;transform:scaleX(0.7570);transform-origin:0 50%;">OUTROS</span><span class="t" style="left:546.60px;top:134.40px;font-size:7.8px;line-height:10px;color:#000;transform:scaleX(0.7570);transform-origin:0 50%;">LUMAX</span><span class="t" style="left:69.50px;top:142.40px;font-size:7.8px;line-height:10px;color:#000;transform:scaleX(0.7570);transform-origin:0 50%;">188BC</span><span class="t" style="left:141.53px;top:142.40px;font-size:7.8px;line-height:10px;color:#000;transform:scaleX(0.7570);transform-origin:100% 50%;">20</span><span class="t" style="left:153.00px;top:142.40px;font-size:7.8px;line-height:10px;color:#000;transform:scaleX(0.7570);transform-origin:0 50%;white-space:pre;">LATA DE TINTA DE EXEMPLO</span><span class="t" style="left:358.20px;top:142.40px;font-size:7.8px;line-height:10px;color:#000;transform:scaleX(0.7570);transform-origin:0 50%;">UNI</span><span class="t" style="left:386.95px;top:142.40px;font-size:7.8px;line-height:10px;color:#000;transform:scaleX(0.7570);transform-origin:100% 50%;">132,60</span><span class="t" style="left:427.49px;top:142.40px;font-size:7.8px;line-height:10px;color:#000;transform:scaleX(0.7570);transform-origin:100% 50%;">4,000</span><span class="t" style="left:450.00px;top:142.40px;font-size:7.8px;line-height:10px;color:#000;transform:scaleX(0.7570);transform-origin:0 50%;">OUTROS</span><span class="t" style="left:546.60px;top:142.40px;font-size:7.8px;line-height:10px;color:#000;transform:scaleX(0.7570);transform-origin:0 50%;">SEGUNDA LINHA</span><span class="t" style="left:644.30px;top:142.40px;font-size:7.8px;line-height:10px;color:#000;transform:scaleX(0.7570);transform-origin:0 50%;">APR/3</span><span class="t" style="left:69.50px;top:150.40px;font-size:7.8px;line-height:10px;color:#000;transform:scaleX(0.7570);transform-origin:0 50%;">123456123456</span><span class="t" style="left:141.53px;top:150.40px;font-size:7.8px;line-height:10px;color:#000;transform:scaleX(0.7570);transform-origin:100% 50%;">19</span><span class="t" style="left:153.00px;top:150.40px;font-size:7.8px;line-height:10px;color:#000;transform:scaleX(0.7570);transform-origin:0 50%;white-space:pre;">MARTELO SUPER NOVO E BONITO PARA MARTELAR</span><span class="t" style="left:358.20px;top:150.40px;font-size:7.8px;line-height:10px;color:#000;transform:scaleX(0.7570);transform-origin:0 50%;">UNI</span><span class="t" style="left:391.29px;top:150.40px;font-size:7.8px;line-height:10px;color:#000;transform:scaleX(0.7570);transform-origin:100% 50%;">13,00</span><span class="t" style="left:427.49px;top:150.40px;font-size:7.8px;line-height:10px;color:#000;transform:scaleX(0.7570);transform-origin:100% 50%;">3,000</span><span class="t" style="left:450.00px;top:150.40px;font-size:7.8px;line-height:10px;color:#000;transform:scaleX(0.7570);transform-origin:0 50%;">OUTROS</span><span class="t" style="left:546.60px;top:150.40px;font-size:7.8px;line-height:10px;color:#000;transform:scaleX(0.7570);transform-origin:0 50%;">INTEL</span><span class="t" style="left:644.30px;top:150.40px;font-size:7.8px;line-height:10px;color:#000;transform:scaleX(0.7570);transform-origin:0 50%;">PRATELEIRA50</span><span class="t" style="left:145.86px;top:158.40px;font-size:7.8px;line-height:10px;color:#000;transform:scaleX(0.7570);transform-origin:100% 50%;">7</span><span class="t" style="left:153.00px;top:158.40px;font-size:7.8px;line-height:10px;color:#000;transform:scaleX(0.7570);transform-origin:0 50%;white-space:pre;">MEMÓRIA DDR 256</span><span class="t" style="left:423.15px;top:158.40px;font-size:7.8px;line-height:10px;color:#000;transform:scaleX(0.7570);transform-origin:100% 50%;">13,000</span><span class="t" style="left:450.00px;top:158.40px;font-size:7.8px;line-height:10px;color:#000;transform:scaleX(0.7570);transform-origin:0 50%;">HD</span><span class="t" style="left:546.60px;top:158.40px;font-size:7.8px;line-height:10px;color:#000;transform:scaleX(0.7570);transform-origin:0 50%;">SANSUNG</span><span class="t" style="left:69.50px;top:166.40px;font-size:7.8px;line-height:10px;color:#5c0008;transform:scaleX(0.7570);transform-origin:0 50%;">1284RD</span><span class="t" style="left:141.53px;top:166.40px;font-size:7.8px;line-height:10px;color:#5c0008;transform:scaleX(0.7570);transform-origin:100% 50%;">26</span><span class="t" style="left:153.00px;top:166.40px;font-size:7.8px;line-height:10px;color:#5c0008;transform:scaleX(0.7570);transform-origin:0 50%;white-space:pre;">MESA PARA CHURRASCO 125X200 ANGELIN</span><span class="t" style="left:386.95px;top:166.40px;font-size:7.8px;line-height:10px;color:#5c0008;transform:scaleX(0.7570);transform-origin:100% 50%;">675,00</span><span class="t" style="left:424.89px;top:166.40px;font-size:7.8px;line-height:10px;color:#5c0008;transform:scaleX(0.7570);transform-origin:100% 50%;">-1,000</span><span class="t" style="left:450.00px;top:166.40px;font-size:7.8px;line-height:10px;color:#5c0008;transform:scaleX(0.7570);transform-origin:0 50%;">OUTROS</span><span class="t" style="left:546.60px;top:166.40px;font-size:7.8px;line-height:10px;color:#5c0008;transform:scaleX(0.7570);transform-origin:0 50%;">MADEFORTE</span><span class="t" style="left:141.53px;top:174.40px;font-size:7.8px;line-height:10px;color:#000;transform:scaleX(0.7570);transform-origin:100% 50%;">31</span><span class="t" style="left:153.00px;top:174.40px;font-size:7.8px;line-height:10px;color:#000;transform:scaleX(0.7570);transform-origin:0 50%;white-space:pre;">MODELO DE PRODUTO</span><span class="t" style="left:380.45px;top:174.40px;font-size:7.8px;line-height:10px;color:#000;transform:scaleX(0.7570);transform-origin:100% 50%;">1.500,00</span><span class="t" style="left:423.15px;top:174.40px;font-size:7.8px;line-height:10px;color:#000;transform:scaleX(0.7570);transform-origin:100% 50%;">56,000</span><span class="t" style="left:450.00px;top:174.40px;font-size:7.8px;line-height:10px;color:#000;transform:scaleX(0.7570);transform-origin:0 50%;">INFORMATICA</span><span class="t" style="left:546.60px;top:174.40px;font-size:7.8px;line-height:10px;color:#000;transform:scaleX(0.7570);transform-origin:0 50%;">COFAP</span><span class="t" style="left:141.53px;top:182.40px;font-size:7.8px;line-height:10px;color:#000;transform:scaleX(0.7570);transform-origin:100% 50%;">10</span><span class="t" style="left:153.00px;top:182.40px;font-size:7.8px;line-height:10px;color:#000;transform:scaleX(0.7570);transform-origin:0 50%;white-space:pre;">MOUSE OPTICO</span><span class="t" style="left:358.20px;top:182.40px;font-size:7.8px;line-height:10px;color:#000;transform:scaleX(0.7570);transform-origin:0 50%;">PC</span><span class="t" style="left:391.29px;top:182.40px;font-size:7.8px;line-height:10px;color:#000;transform:scaleX(0.7570);transform-origin:100% 50%;">45,00</span><span class="t" style="left:427.49px;top:182.40px;font-size:7.8px;line-height:10px;color:#000;transform:scaleX(0.7570);transform-origin:100% 50%;">1,000</span><span class="t" style="left:450.00px;top:182.40px;font-size:7.8px;line-height:10px;color:#000;transform:scaleX(0.7570);transform-origin:0 50%;">PERIFÉRICOS</span><span class="t" style="left:546.60px;top:182.40px;font-size:7.8px;line-height:10px;color:#000;transform:scaleX(0.7570);transform-origin:0 50%;">SATÉLITE</span><span class="t" style="left:644.30px;top:182.40px;font-size:7.8px;line-height:10px;color:#000;transform:scaleX(0.7570);transform-origin:0 50%;">AZ25</span><span class="t" style="left:142.11px;top:190.40px;font-size:7.8px;line-height:10px;color:#000;transform:scaleX(0.7570);transform-origin:100% 50%;">11</span><span class="t" style="left:153.00px;top:190.40px;font-size:7.8px;line-height:10px;color:#000;transform:scaleX(0.7570);transform-origin:0 50%;white-space:pre;">MOUSE SCROOL</span><span class="t" style="left:358.20px;top:190.40px;font-size:7.8px;line-height:10px;color:#000;transform:scaleX(0.7570);transform-origin:0 50%;">PC</span><span class="t" style="left:391.29px;top:190.40px;font-size:7.8px;line-height:10px;color:#000;transform:scaleX(0.7570);transform-origin:100% 50%;">42,00</span><span class="t" style="left:423.15px;top:190.40px;font-size:7.8px;line-height:10px;color:#000;transform:scaleX(0.7570);transform-origin:100% 50%;">10,000</span><span class="t" style="left:450.00px;top:190.40px;font-size:7.8px;line-height:10px;color:#000;transform:scaleX(0.7570);transform-origin:0 50%;">MOUSE</span><span class="t" style="left:546.60px;top:190.40px;font-size:7.8px;line-height:10px;color:#000;transform:scaleX(0.7570);transform-origin:0 50%;">LEGTECH</span><span class="t" style="left:145.86px;top:198.40px;font-size:7.8px;line-height:10px;color:#000;transform:scaleX(0.7570);transform-origin:100% 50%;">8</span><span class="t" style="left:153.00px;top:198.40px;font-size:7.8px;line-height:10px;color:#000;transform:scaleX(0.7570);transform-origin:0 50%;white-space:pre;">PEN DRIVE 2G</span><span class="t" style="left:358.20px;top:198.40px;font-size:7.8px;line-height:10px;color:#000;transform:scaleX(0.7570);transform-origin:0 50%;">PC</span><span class="t" style="left:391.29px;top:198.40px;font-size:7.8px;line-height:10px;color:#000;transform:scaleX(0.7570);transform-origin:100% 50%;">37,50</span><span class="t" style="left:423.15px;top:198.40px;font-size:7.8px;line-height:10px;color:#000;transform:scaleX(0.7570);transform-origin:100% 50%;">12,000</span><span class="t" style="left:450.00px;top:198.40px;font-size:7.8px;line-height:10px;color:#000;transform:scaleX(0.7570);transform-origin:0 50%;">PEN DRIVE</span><span class="t" style="left:546.60px;top:198.40px;font-size:7.8px;line-height:10px;color:#000;transform:scaleX(0.7570);transform-origin:0 50%;">KINGSTON</span><span class="t" style="left:145.86px;top:206.40px;font-size:7.8px;line-height:10px;color:#000;transform:scaleX(0.7570);transform-origin:100% 50%;">9</span><span class="t" style="left:153.00px;top:206.40px;font-size:7.8px;line-height:10px;color:#000;transform:scaleX(0.7570);transform-origin:0 50%;white-space:pre;">PEN DRIVE 4G</span><span class="t" style="left:358.20px;top:206.40px;font-size:7.8px;line-height:10px;color:#000;transform:scaleX(0.7570);transform-origin:0 50%;">PC</span><span class="t" style="left:391.29px;top:206.40px;font-size:7.8px;line-height:10px;color:#000;transform:scaleX(0.7570);transform-origin:100% 50%;">45,00</span><span class="t" style="left:423.15px;top:206.40px;font-size:7.8px;line-height:10px;color:#000;transform:scaleX(0.7570);transform-origin:100% 50%;">22,000</span><span class="t" style="left:450.00px;top:206.40px;font-size:7.8px;line-height:10px;color:#000;transform:scaleX(0.7570);transform-origin:0 50%;">PEN DRIVE</span><span class="t" style="left:546.60px;top:206.40px;font-size:7.8px;line-height:10px;color:#000;transform:scaleX(0.7570);transform-origin:0 50%;">KINGSTON</span><span class="t" style="left:141.53px;top:214.40px;font-size:7.8px;line-height:10px;color:#000;transform:scaleX(0.7570);transform-origin:100% 50%;">12</span><span class="t" style="left:153.00px;top:214.40px;font-size:7.8px;line-height:10px;color:#000;transform:scaleX(0.7570);transform-origin:0 50%;white-space:pre;">PLACA DE VIDEO 256</span><span class="t" style="left:386.95px;top:214.40px;font-size:7.8px;line-height:10px;color:#000;transform:scaleX(0.7570);transform-origin:100% 50%;">184,80</span><span class="t" style="left:427.49px;top:214.40px;font-size:7.8px;line-height:10px;color:#000;transform:scaleX(0.7570);transform-origin:100% 50%;">2,000</span><span class="t" style="left:450.00px;top:214.40px;font-size:7.8px;line-height:10px;color:#000;transform:scaleX(0.7570);transform-origin:0 50%;">PLACA DE VIDEO</span><span class="t" style="left:546.60px;top:214.40px;font-size:7.8px;line-height:10px;color:#000;transform:scaleX(0.7570);transform-origin:0 50%;">SANSUNG</span><span class="t" style="left:69.50px;top:222.40px;font-size:7.8px;line-height:10px;color:#000;transform:scaleX(0.7570);transform-origin:0 50%;">SO12524MP400</span><span class="t" style="left:145.86px;top:222.40px;font-size:7.8px;line-height:10px;color:#000;transform:scaleX(0.7570);transform-origin:100% 50%;">1</span><span class="t" style="left:153.00px;top:222.40px;font-size:7.8px;line-height:10px;color:#000;transform:scaleX(0.7570);transform-origin:0 50%;white-space:pre;">PLACA MÃE SOYO</span><span class="t" style="left:358.20px;top:222.40px;font-size:7.8px;line-height:10px;color:#000;transform:scaleX(0.7570);transform-origin:0 50%;">PC</span><span class="t" style="left:386.95px;top:222.40px;font-size:7.8px;line-height:10px;color:#000;transform:scaleX(0.7570);transform-origin:100% 50%;">260,00</span><span class="t" style="left:427.49px;top:222.40px;font-size:7.8px;line-height:10px;color:#000;transform:scaleX(0.7570);transform-origin:100% 50%;">3,000</span><span class="t" style="left:450.00px;top:222.40px;font-size:7.8px;line-height:10px;color:#000;transform:scaleX(0.7570);transform-origin:0 50%;">PLACA MÃE</span><span class="t" style="left:546.60px;top:222.40px;font-size:7.8px;line-height:10px;color:#000;transform:scaleX(0.7570);transform-origin:0 50%;">INTEL</span><span class="t" style="left:141.53px;top:230.40px;font-size:7.8px;line-height:10px;color:#000;transform:scaleX(0.7570);transform-origin:100% 50%;">14</span><span class="t" style="left:153.00px;top:230.40px;font-size:7.8px;line-height:10px;color:#000;transform:scaleX(0.7570);transform-origin:0 50%;white-space:pre;">PREGO VERMELHO</span><span class="t" style="left:391.29px;top:230.40px;font-size:7.8px;line-height:10px;color:#000;transform:scaleX(0.7570);transform-origin:100% 50%;">15,00</span><span class="t" style="left:423.15px;top:230.40px;font-size:7.8px;line-height:10px;color:#000;transform:scaleX(0.7570);transform-origin:100% 50%;">55,000</span><span class="t" style="left:145.86px;top:238.40px;font-size:7.8px;line-height:10px;color:#000;transform:scaleX(0.7570);transform-origin:100% 50%;">3</span><span class="t" style="left:153.00px;top:238.40px;font-size:7.8px;line-height:10px;color:#000;transform:scaleX(0.7570);transform-origin:0 50%;white-space:pre;">TECLADO 102ABNT</span><span class="t" style="left:358.20px;top:238.40px;font-size:7.8px;line-height:10px;color:#000;transform:scaleX(0.7570);transform-origin:0 50%;">UNI</span><span class="t" style="left:391.29px;top:238.40px;font-size:7.8px;line-height:10px;color:#000;transform:scaleX(0.7570);transform-origin:100% 50%;">19,50</span><span class="t" style="left:427.49px;top:238.40px;font-size:7.8px;line-height:10px;color:#000;transform:scaleX(0.7570);transform-origin:100% 50%;">7,000</span><span class="t" style="left:450.00px;top:238.40px;font-size:7.8px;line-height:10px;color:#000;transform:scaleX(0.7570);transform-origin:0 50%;">PERIFÉRICOS</span><span class="t" style="left:546.60px;top:238.40px;font-size:7.8px;line-height:10px;color:#000;transform:scaleX(0.7570);transform-origin:0 50%;">LEGTECH</span><span class="t" style="left:145.86px;top:246.40px;font-size:7.8px;line-height:10px;color:#000;transform:scaleX(0.7570);transform-origin:100% 50%;">4</span><span class="t" style="left:153.00px;top:246.40px;font-size:7.8px;line-height:10px;color:#000;transform:scaleX(0.7570);transform-origin:0 50%;white-space:pre;">TECLADO MODERNO 102 ABNT</span><span class="t" style="left:358.20px;top:246.40px;font-size:7.8px;line-height:10px;color:#000;transform:scaleX(0.7570);transform-origin:0 50%;">PC</span><span class="t" style="left:391.29px;top:246.40px;font-size:7.8px;line-height:10px;color:#000;transform:scaleX(0.7570);transform-origin:100% 50%;">58,50</span><span class="t" style="left:423.15px;top:246.40px;font-size:7.8px;line-height:10px;color:#000;transform:scaleX(0.7570);transform-origin:100% 50%;">14,000</span><span class="t" style="left:450.00px;top:246.40px;font-size:7.8px;line-height:10px;color:#000;transform:scaleX(0.7570);transform-origin:0 50%;">PERIFÉRICOS</span><span class="t" style="left:546.60px;top:246.40px;font-size:7.8px;line-height:10px;color:#000;transform:scaleX(0.7570);transform-origin:0 50%;">LEGTECH</span><span class="t" style="left:141.53px;top:254.40px;font-size:7.8px;line-height:10px;color:#000;transform:scaleX(0.7570);transform-origin:100% 50%;">30</span><span class="t" style="left:153.00px;top:254.40px;font-size:7.8px;line-height:10px;color:#000;transform:scaleX(0.7570);transform-origin:0 50%;white-space:pre;">TESTE DO TESTE</span><span class="t" style="left:386.95px;top:254.40px;font-size:7.8px;line-height:10px;color:#000;transform:scaleX(0.7570);transform-origin:100% 50%;">130,00</span><span class="t" style="left:427.49px;top:254.40px;font-size:7.8px;line-height:10px;color:#000;transform:scaleX(0.7570);transform-origin:100% 50%;">5,000</span><span class="t" style="left:450.00px;top:254.40px;font-size:7.8px;line-height:10px;color:#000;transform:scaleX(0.7570);transform-origin:0 50%;">OUTROS</span><span class="t" style="left:546.60px;top:254.40px;font-size:7.8px;line-height:10px;color:#000;transform:scaleX(0.7570);transform-origin:0 50%;">BRASTEMP</span><span class="t" style="left:69.50px;top:262.40px;font-size:7.8px;line-height:10px;color:#000;transform:scaleX(0.7570);transform-origin:0 50%;">VISITA</span><span class="t" style="left:141.53px;top:262.40px;font-size:7.8px;line-height:10px;color:#000;transform:scaleX(0.7570);transform-origin:100% 50%;">28</span><span class="t" style="left:153.00px;top:262.40px;font-size:7.8px;line-height:10px;color:#000;transform:scaleX(0.7570);transform-origin:0 50%;white-space:pre;">VISITA TECNICA</span><span class="t" style="left:391.29px;top:262.40px;font-size:7.8px;line-height:10px;color:#000;transform:scaleX(0.7570);transform-origin:100% 50%;">25,00</span></div>
<div style="left:735.6px;top:128.7px;width:9px;height:296.3px;background:#f0f0f0;border-left:1px solid #e3e3e3;box-sizing:border-box;"></div>
<div style="left:736.6px;top:136.7px;width:7.5px;height:9.5px;background:linear-gradient(90deg,#f5f5f5,#dcdcdc);border:1px solid #9a9a9a;border-radius:1.5px;box-sizing:border-box;"></div>
<svg style="left:738.800px;top:132.3px" width="3" height="2" viewBox="0 0 3 2"><path d="M0 2h3L1.500 0z" fill="#555"/></svg>
<svg style="left:738.800px;top:420px" width="3" height="2" viewBox="0 0 3 2"><path d="M0 0h3L1.500 2z" fill="#555"/></svg>
<div style="left:55.5px;top:425px;width:689.1px;height:8.4px;background:#f0f0f0;border-top:1px solid #e3e3e3;box-sizing:border-box;"></div>
<div style="left:66px;top:426px;width:31px;height:7px;background:linear-gradient(#f5f5f5,#dcdcdc);border:1px solid #9a9a9a;border-radius:1.5px;box-sizing:border-box;"></div>
<div style="left:80px;top:428px;width:0.6px;height:3px;background:#666;"></div>
<div style="left:81.3px;top:428px;width:0.6px;height:3px;background:#666;"></div>
<div style="left:82.6px;top:428px;width:0.6px;height:3px;background:#666;"></div>
<svg style="left:58.500px;top:427.600px" width="3" height="4" viewBox="0 0 3 4"><path d="M3 0v4L0 2z" fill="#444"/></svg>
<svg style="left:729.800px;top:427.600px" width="2.600" height="3.600" viewBox="0 0 3 4"><path d="M0 0v4L3 2z" fill="#444"/></svg>
<div style="left:55px;top:447.5px;width:6px;height:6px;border-radius:50%;border:0.8px solid #a3adb9;background:radial-gradient(#fdfdfd,#d6dadf);box-sizing:border-box;"></div><div style="left:56.5px;top:449px;width:3px;height:3px;border-radius:50%;background:#1c5a9c;"></div>
<span class="t" style="left:66.00px;top:445.50px;font-size:7.8px;line-height:10px;color:#000;transform:scaleX(0.7501);transform-origin:0 50%;">&gt; Habilitar o Gerenciamento do Estoque por Cores</span>
<div style="left:305px;top:446px;width:6.5px;height:7.5px;background:#c0dcc0;border:0.5px solid #b5c9b5;box-sizing:border-box;"></div>
<span class="t" style="left:315.00px;top:445.50px;font-size:7.8px;line-height:10px;color:#000;transform:scaleX(0.7570);transform-origin:0 50%;">Em estoque</span>
<div style="left:373.8px;top:446px;width:6.5px;height:7.5px;background:#ffff73;border:0.5px solid #dede9a;box-sizing:border-box;"></div>
<span class="t" style="left:384.40px;top:445.50px;font-size:7.8px;line-height:10px;color:#000;transform:scaleX(0.7570);transform-origin:0 50%;">Estoque Baixo</span>
<div style="left:442.2px;top:446px;width:6.5px;height:7.5px;background:#ffb3b3;border:0.5px solid #e0a8a8;box-sizing:border-box;"></div>
<span class="t" style="left:452.60px;top:445.50px;font-size:7.8px;line-height:10px;color:#000;transform:scaleX(0.7570);transform-origin:0 50%;">Estoque Zerado</span>
<span class="t" style="left:513.20px;top:445.30px;font-size:7.8px;line-height:10px;color:#000;transform:scaleX(0.7570);transform-origin:0 50%;">|</span>
<div style="left:522.8px;top:446px;width:6.5px;height:7.5px;background:#e6e6e6;border:0.5px solid #d2d2d2;box-sizing:border-box;"></div>
<span class="t" style="left:532.50px;top:445.50px;font-size:7.8px;line-height:10px;color:#000;transform:scaleX(0.7539);transform-origin:0 50%;">Item Serviço ou sem Controle de Estoque</span>
<span class="t" style="left:667.50px;top:445.50px;font-size:7.8px;line-height:10px;color:#000;transform:scaleX(0.7489);transform-origin:0 50%;">Para sair ESC ou botão SAIR</span>
<div style="left:798.3px;top:12px;width:1.7px;height:474px;background:rgba(80,90,60,0.42);"></div>
<div style="left:0px;top:486px;width:800px;height:11.9px;background:linear-gradient(#e6eef9,#d0ddef 50%,#c1d2e8);border-top:0.8px solid #c3cedc;box-sizing:border-box;"></div>
<div style="left:0px;top:497.8px;width:800px;height:2.2px;background:#d4d9e0;border-top:0.7px solid #8e959e;box-sizing:border-box;"></div>
<div style="left:42px;top:497.8px;width:0.7px;height:2.2px;background:#8e959e;"></div>
<div style="left:76px;top:497.8px;width:0.7px;height:2.2px;background:#8e959e;"></div>
<div style="left:110px;top:497.8px;width:0.7px;height:2.2px;background:#8e959e;"></div>
<div style="left:144px;top:497.8px;width:0.7px;height:2.2px;background:#8e959e;"></div>
<div style="left:178px;top:497.8px;width:0.7px;height:2.2px;background:#8e959e;"></div>
<div style="left:206px;top:497.8px;width:0.7px;height:2.2px;background:#8e959e;"></div>
<div style="left:218px;top:497.8px;width:0.7px;height:2.2px;background:#8e959e;"></div>
<div style="left:240px;top:497.8px;width:0.7px;height:2.2px;background:#8e959e;"></div>
<div style="left:195px;top:487.3px;width:0.6px;height:9.8px;background:#a9b7c9;"></div>
<div style="left:195.6px;top:487.3px;width:0.6px;height:9.8px;background:#f4f8fc;"></div>
<div style="left:216.5px;top:487.3px;width:0.6px;height:9.8px;background:#a9b7c9;"></div>
<div style="left:217.1px;top:487.3px;width:0.6px;height:9.8px;background:#f4f8fc;"></div>
<div style="left:238px;top:487.3px;width:0.6px;height:9.8px;background:#a9b7c9;"></div>
<div style="left:238.6px;top:487.3px;width:0.6px;height:9.8px;background:#f4f8fc;"></div>
<div style="left:254px;top:487.3px;width:0.6px;height:9.8px;background:#a9b7c9;"></div>
<div style="left:254.6px;top:487.3px;width:0.6px;height:9.8px;background:#f4f8fc;"></div>
<div style="left:295px;top:487.3px;width:0.6px;height:9.8px;background:#a9b7c9;"></div>
<div style="left:295.6px;top:487.3px;width:0.6px;height:9.8px;background:#f4f8fc;"></div>
<div style="left:328px;top:487.3px;width:0.6px;height:9.8px;background:#a9b7c9;"></div>
<div style="left:328.6px;top:487.3px;width:0.6px;height:9.8px;background:#f4f8fc;"></div>
<div style="left:400px;top:487.3px;width:0.6px;height:9.8px;background:#a9b7c9;"></div>
<div style="left:400.6px;top:487.3px;width:0.6px;height:9.8px;background:#f4f8fc;"></div>
<div style="left:507.5px;top:487.3px;width:0.6px;height:9.8px;background:#a9b7c9;"></div>
<div style="left:508.1px;top:487.3px;width:0.6px;height:9.8px;background:#f4f8fc;"></div>
<div style="left:603px;top:487.3px;width:0.6px;height:9.8px;background:#a9b7c9;"></div>
<div style="left:603.6px;top:487.3px;width:0.6px;height:9.8px;background:#f4f8fc;"></div>
<div style="left:690px;top:487.3px;width:0.6px;height:9.8px;background:#a9b7c9;"></div>
<div style="left:690.6px;top:487.3px;width:0.6px;height:9.8px;background:#f4f8fc;"></div>
<div style="left:778px;top:487.3px;width:0.6px;height:9.8px;background:#a9b7c9;"></div>
<div style="left:778.6px;top:487.3px;width:0.6px;height:9.8px;background:#f4f8fc;"></div>
<span class="t" style="left:2.50px;top:488.40px;font-size:7.3px;line-height:9px;color:#0a0a14;transform:scaleX(0.8082);transform-origin:0 50%;">PORTO ALEGRE - RS 25 de Dezembro de 2025 - Quinta-feira</span>
<span class="t" style="left:200.00px;top:488.40px;font-size:7.3px;line-height:9px;color:#000;transform:scaleX(0.8568);transform-origin:0 50%;">Num</span>
<span class="t" style="left:221.00px;top:488.40px;font-size:7.3px;line-height:9px;color:#a8b4c4;transform:scaleX(0.8336);transform-origin:0 50%;">Caps</span>
<span class="t" style="left:243.30px;top:488.40px;font-size:7.3px;line-height:9px;color:#a8b4c4;transform:scaleX(0.8219);transform-origin:0 50%;">Ins</span>
<span class="t" style="left:259.50px;top:488.40px;font-size:7.3px;line-height:9px;color:#000;transform:scaleX(0.8899);transform-origin:0 50%;">25/12/2025</span>
<span class="t" style="left:300.30px;top:488.40px;font-size:7.3px;line-height:9px;color:#000;transform:scaleX(0.8872);transform-origin:0 50%;">05:43:49</span>
<span class="t" style="left:355.50px;top:488.40px;font-size:7.3px;line-height:9px;color:#e0202a;transform:scaleX(0.8551);transform-origin:0 50%;">MASTER</span>
<span class="t" style="left:432.50px;top:488.40px;font-size:7.3px;line-height:9px;color:#000;transform:scaleX(0.8407);transform-origin:0 50%;">Versão Vendas 7.0</span>
<span class="t" style="left:531.00px;top:488.40px;font-size:7.3px;line-height:9px;color:#000;transform:scaleX(0.8085);transform-origin:0 50%;">Pesquisar Imagens</span>
<span class="t" style="left:628.50px;top:488.40px;font-size:7.3px;line-height:9px;color:#000;transform:scaleX(0.8254);transform-origin:0 50%;">Pesquisar PDF</span>
<span class="t" style="left:743.80px;top:488.40px;font-size:7.3px;line-height:9px;color:#e0202a;transform:scaleX(0.8265);transform-origin:0 50%;">FpqSystem</span>
<svg style="left:0;top:0" width="800" height="500" viewBox="0 0 800 500"><g transform="translate(0 0.6)"><circle cx="333.40" cy="490.500" r="2.200" fill="#f4c830" stroke="#a8820c" stroke-width=".5"/><circle cx="337.00" cy="493.500" r="2.200" fill="#f4c830" stroke="#a8820c" stroke-width=".5"/><path d="M334.60 491.500l3 3.600" stroke="#8a6a0c" stroke-width="1"/><circle cx="785.40" cy="490.500" r="2.200" fill="#f4c830" stroke="#a8820c" stroke-width=".5"/><circle cx="789.00" cy="493.500" r="2.200" fill="#f4c830" stroke="#a8820c" stroke-width=".5"/><path d="M786.60 491.500l3 3.600" stroke="#8a6a0c" stroke-width="1"/><path d="M411.600 489.200l6-1 1 5-6 1.200z" fill="#d8f0f4" stroke="#58a0b0" stroke-width=".6"/><path d="M412 496l7-1.200" stroke="#7a8a9a" stroke-width="1"/><path d="M511.400 489l3 2.400 3.400-2.600" stroke="#3c9c3c" stroke-width="1.200" fill="none"/><path d="M513 492.600l4.400 2.800" stroke="#5a5a8a" stroke-width="1.300"/><circle cx="512.600" cy="492.400" r="1.200" fill="#e8c030"/><path d="M607.600 487.600h5l2.400 2.400v7h-7.400z" fill="#fff" stroke="#8a8a8a" stroke-width=".5"/><rect x="606.600" y="491.600" width="9" height="3.600" rx=".8" fill="#e0242c"/><circle cx="700" cy="492" r="3.600" fill="#3c9cd8"/><path d="M697.600 490.400q2.400-2 4.400 0t-1 3.600" fill="#4cb84c"/><rect x="696" y="493" width="5.600" height="3.400" fill="#f4f4f4" stroke="#7a7a7a" stroke-width=".5"/><path d="M710.600 492l2-3.400h3.400l2 3.400v3.400h-7.400z" fill="#e4e6ea" stroke="#8a8e96" stroke-width=".5"/><rect x="712" y="493" width="4.600" height="1.200" fill="#9a9ea6"/><rect x="725" y="488.400" width="7.400" height="4.600" fill="#4a5a6a" stroke="#2a3440" stroke-width=".5"/><rect x="726" y="489.200" width="5.400" height="3" fill="#9ccce8"/><path d="M724.400 495.600h8.600M728.700 493v2.600" stroke="#3a4450" stroke-width="1"/></g></svg>
</div></body></html>
